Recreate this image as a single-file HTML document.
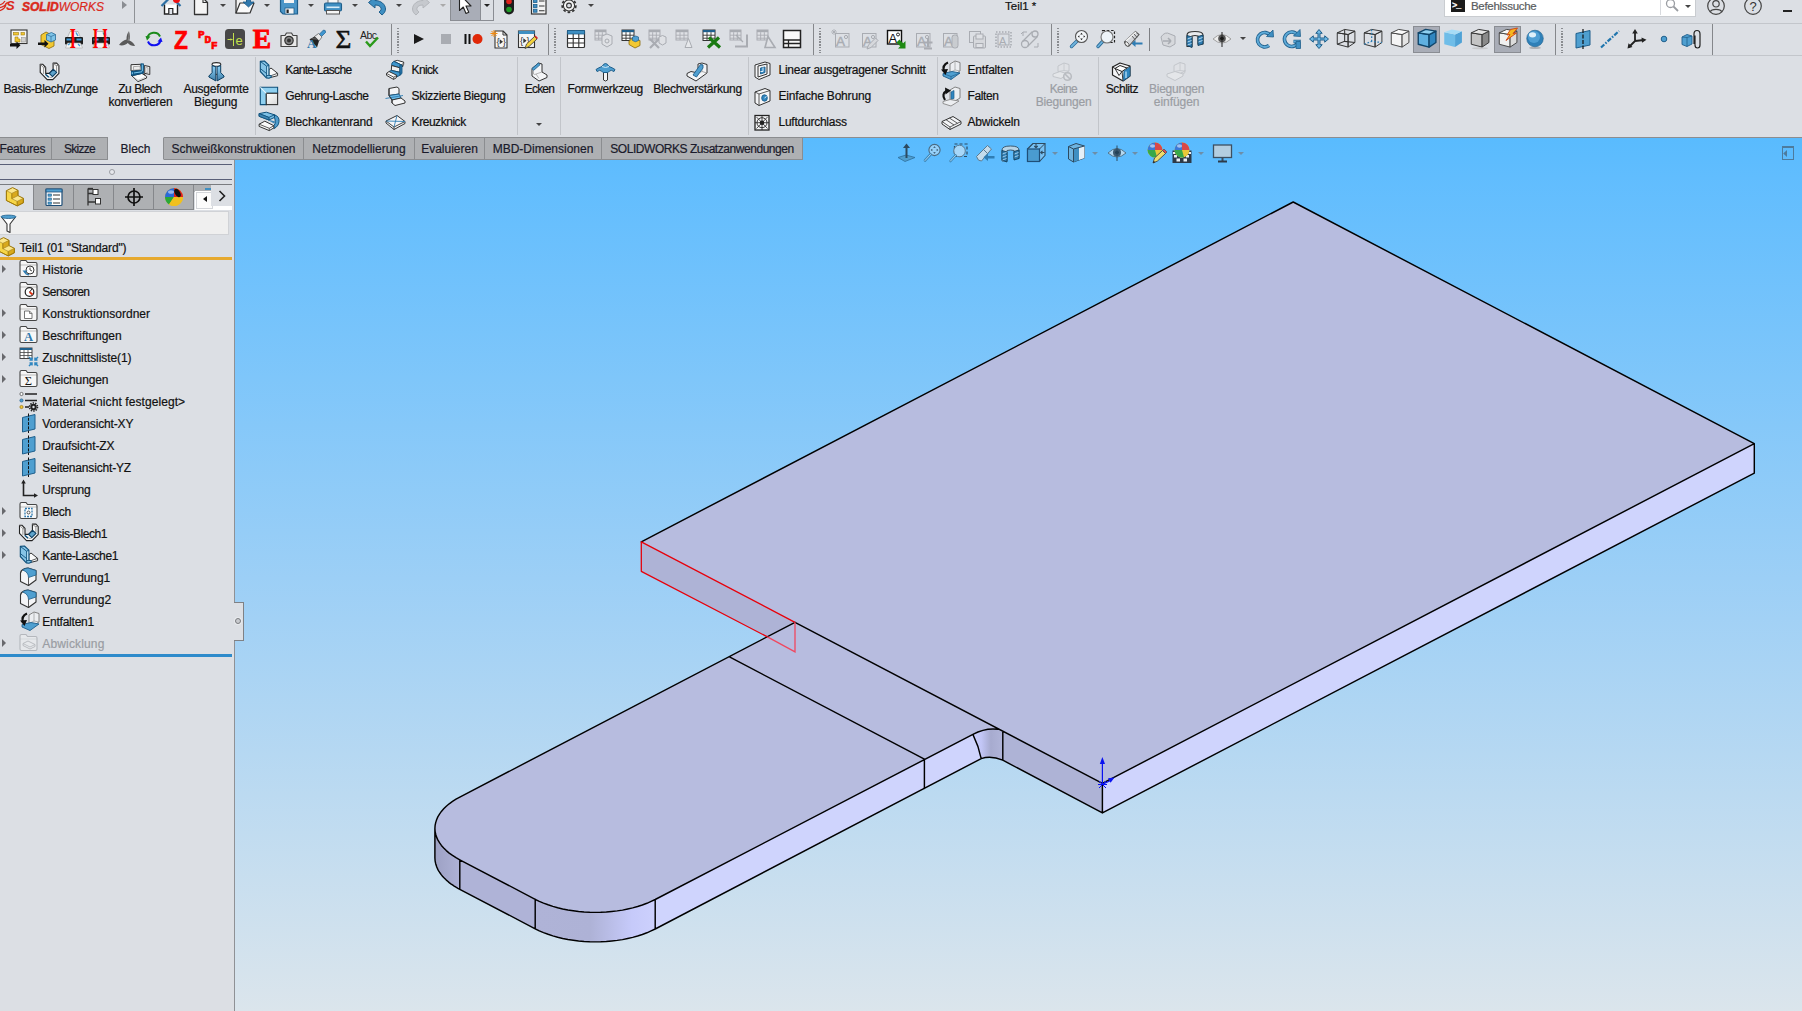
<!DOCTYPE html>
<html lang="de"><head><meta charset="utf-8"><title>Teil1 - SOLIDWORKS</title>
<style>
*{box-sizing:border-box;margin:0;padding:0}
html,body{width:1802px;height:1011px;overflow:hidden}
body{position:relative;-webkit-text-stroke:0.2px;background:#dcdfe4;font-family:"Liberation Sans",sans-serif;font-size:12px;color:#111;line-height:14px}
.abs{position:absolute}
#vp{position:absolute;left:0;top:138px;width:1802px;height:873px;background:linear-gradient(#59bbfe 0px,#61bdfe 40px,#9ccff6 440px,#dbe5ec 873px)}
#top{position:absolute;left:0;top:0;width:1802px;height:138px;background:#dcdfe4;border-bottom:1px solid #8c8d90}
.hl{position:absolute;left:0;width:1802px;height:1px;background:#c3c6cb}
.vs{position:absolute;width:1px;background:#c2c5ca}
.t{position:absolute;white-space:nowrap;line-height:14px;color:#111}
.tc{position:absolute;white-space:nowrap;line-height:13px;text-align:center;color:#111;transform:translateX(-50%)}
.g{color:#9a9da3 !important}
svg{overflow:visible}
.ic{position:absolute;width:24px;height:24px}
.dd{position:absolute;width:0;height:0;border:3px solid transparent;border-top:3.5px solid #444;border-bottom:0}
#tabs{position:absolute;left:0;top:137px;height:23px;width:803px}
.tab{position:absolute;top:0;height:23px;background:#aeb0b3;border:1px solid #8b8d90;border-left:0;line-height:23.5px;text-align:center;white-space:nowrap;color:#1a1a2a;font-size:12px}
.tab.act{background:#dcdfe4;border-color:#dcdfe4;border-right:1px solid #8b8d90}
#panel{position:absolute;left:0;top:160px;width:234px;height:851px;background:#dcdfe4}
#pborder{position:absolute;left:234px;top:160px;width:1px;height:851px;background:#8f9195}
.ti{position:absolute;left:42px;white-space:nowrap;line-height:24px;height:22px;color:#111}
.ex{position:absolute;left:2px;width:0;height:0;border:4px solid transparent;border-left:4.5px solid #68696d;border-right:0}
</style></head><body>

<div id="vp"></div>
<div id="top">
<div class="hl" style="top:23px"></div>
<div class="hl" style="top:55px"></div>
<div class="vs" style="left:134px;top:0;height:23px;background:#8f9296"></div>
<!-- logo -->
<div class="t" style="left:22px;top:-1.5px;font-size:12px;line-height:16px;color:#da291c;font-style:italic;letter-spacing:0px"><b style="-webkit-text-stroke:.5px #da291c">SOLID</b>WORKS</div>
<svg class="abs" style="left:-4px;top:-3px" width="22" height="16" viewBox="0 0 22 16"><path d="M0,8 Q6,9 9,4 M1,11 Q8,11 11.500,5 M3,14 Q10,12 10,6" fill="none" stroke="#da291c" stroke-width="1.300"/><text x="10" y="13" font-size="13" font-style="italic" font-weight="bold" font-family="Liberation Sans,sans-serif" fill="#da291c">S</text></svg>
<div class="abs" style="left:122px;top:1px;width:0;height:0;border:4.5px solid transparent;border-left:5px solid #8a8d92;border-right:0"></div>
<div class="t" style="left:1005px;top:-1px;font-size:11.5px">Teil1 *</div>
<!-- search -->
<div class="abs" style="left:1444px;top:-2px;width:252px;height:19px;background:#fff;border:1px solid #c9ccd0"></div>
<div class="abs" style="left:1451px;top:-1px;width:14px;height:13px;background:#1b1b1b"></div>
<div class="t" style="left:1452px;top:-2px;font-size:9px;color:#fff;font-weight:bold;letter-spacing:-1px">&gt;_</div>
<div class="t" style="left:1471px;top:-1px;font-size:11.5px;color:#5a5c60;letter-spacing:-0.3px">Befehlssuche</div>
<div class="vs" style="left:1660px;top:0;height:15px;background:#d8dade"></div>
<div class="dd" style="left:1685px;top:5px"></div>
</div>

<div id="qat">
<!-- home -->
<svg class="abs" style="left:160px;top:-8px" width="22" height="24" viewBox="0 0 22 24"><path d="M4.5,12.5 V22 H17.500 V12.5" fill="#fff" stroke="#222" stroke-width="1.4"/><path d="M8.8,22 v-5.500 h4 V22" fill="#dfe3ea" stroke="#222" stroke-width="1.2"/><path d="M1.500,14 L11,4.500 L20.500,14" fill="none" stroke="#2d6fa3" stroke-width="2.200"/><circle cx="16.500" cy="7.500" r="3.500" fill="#f01010"/></svg>
<!-- new -->
<svg class="abs" style="left:192px;top:-4.500px" width="18" height="24" viewBox="0 0 18 24"><path d="M2.500,2 H11 L15.500,6.500 V18.500 H2.500Z" fill="#f4f4f4" stroke="#333" stroke-width="1.3" stroke-linejoin="round"/><path d="M11,2 V6.500 H15.500" fill="none" stroke="#333" stroke-width="1.1"/></svg>
<div class="dd" style="left:220px;top:4px"></div>
<!-- open -->
<svg class="abs" style="left:233px;top:-8px" width="24" height="24" viewBox="0 0 24 24"><path d="M3,4 H14 V21 H3Z" fill="#f2f2f2" stroke="#333" stroke-width="1.2"/><path d="M7,11 H21 L17,21 H3Z" fill="#fafafa" stroke="#333" stroke-width="1.2" stroke-linejoin="round"/><path d="M13.500,4 v6 h-3.500 l5.500,5 l5.500,-5 h-3.500 v-6z" fill="#2f78ad" stroke="#1d5a86" stroke-width=".8"/></svg>
<div class="dd" style="left:264px;top:4px"></div>
<!-- save -->
<svg class="abs" style="left:278px;top:-8px" width="22" height="24" viewBox="0 0 22 24"><path d="M2.500,2 H19.500 V22 H5 L2.500,19.500Z" fill="#4b96c8" stroke="#1f5f8c" stroke-width="1.2"/><rect x="6" y="2" width="10" height="9" fill="#f4f4f4"/><rect x="7" y="16" width="9" height="6" fill="#f4f4f4" stroke="#1f5f8c" stroke-width=".8"/><rect x="8.500" y="17.500" width="2.200" height="3.500" fill="#222"/></svg>
<div class="dd" style="left:308px;top:4px"></div>
<!-- print -->
<svg class="abs" style="left:322px;top:-8px" width="22" height="24" viewBox="0 0 22 24"><rect x="6" y="2" width="10" height="11" fill="#f6f6f6" stroke="#666" stroke-width=".9"/><rect x="2.500" y="11" width="17" height="8" rx="1.500" fill="#3f8fc2" stroke="#1f5f8c" stroke-width="1.100"/><rect x="4.500" y="14.500" width="13" height="1.600" fill="#d8ecf8"/><rect x="4.500" y="18.500" width="13" height="3.500" fill="#f6f6f6" stroke="#555" stroke-width="1"/></svg>
<div class="dd" style="left:352px;top:4px"></div>
<!-- undo -->
<svg class="abs" style="left:366px;top:-6px" width="22" height="24" viewBox="0 0 22 24"><path d="M2.500,8.500 L9,3 V6.500 C15,6.500 19.500,10.500 19.500,15 C19.500,17.500 18,19.500 16,21 L13,18 C15,16.500 15.500,15.500 15,14 C14.500,12 12,11 9,11 V14Z" fill="#3f8fc2" stroke="#1f5f8c" stroke-width="1"/></svg>
<div class="dd" style="left:396px;top:4px"></div>
<!-- redo gray -->
<svg class="abs" style="left:410px;top:-6px" width="22" height="24" viewBox="0 0 22 24"><path d="M19.500,8.500 L13,3 V6.500 C7,6.500 2.500,10.500 2.500,15 C2.500,17.500 4,19.500 6,21 L9,18 C7,16.500 6.500,15.500 7,14 C7.500,12 10,11 13,11 V14Z" fill="#c6c9ce" stroke="#b4b7bc" stroke-width="1"/></svg>
<div class="dd" style="left:440px;top:4px;border-top-color:#aaa"></div>
<!-- select -->
<div class="abs" style="left:450px;top:-2px;width:31px;height:23px;background:#a9adb7;border:1px solid #8a8d93"></div>
<div class="abs" style="left:480px;top:-2px;width:14px;height:23px;border:1px solid #8a8d93;border-left:0"></div>
<svg class="abs" style="left:457px;top:-8px" width="16" height="24" viewBox="0 0 16 24"><path d="M2.500,2 V18.500 L6.300,15 L9,21.500 L11.800,20.300 L9,14 H14Z" fill="#fff" stroke="#222" stroke-width="1.1" stroke-linejoin="round"/></svg>
<div class="dd" style="left:483.500px;top:4px;border-top-color:#222"></div>
<!-- traffic light -->
<svg class="abs" style="left:503px;top:-8px" width="12" height="24" viewBox="0 0 12 24"><rect x="1" y="1" width="10" height="21.500" rx="5" fill="#1d1d1d"/><circle cx="6" cy="9.500" r="2.800" fill="#e0221c"/><circle cx="6" cy="17.500" r="2.800" fill="#1f9a26"/></svg>
<!-- options list -->
<svg class="abs" style="left:530px;top:-8px" width="18" height="24" viewBox="0 0 18 24"><rect x="1.500" y="2" width="14.500" height="20" fill="#f2f2f2" stroke="#333" stroke-width="1.2"/><g fill="#3f8fc2" stroke="#1f5f8c" stroke-width=".8"><rect x="3.500" y="7.500" width="3.500" height="3"/><rect x="3.500" y="12.500" width="3.500" height="3"/><rect x="3.500" y="17.200" width="3.500" height="3"/></g><path d="M9,9 h5.500 M9,14 h5.500 M9,18.700 h5.500" stroke="#333" stroke-width="1.100"/></svg>
<!-- gear -->
<svg class="abs" style="left:560px;top:-7px" width="18" height="22" viewBox="0 0 18 22"><circle cx="9" cy="12.500" r="6.800" fill="#f4f4f4" stroke="#333" stroke-width="1.800" stroke-dasharray="2.600 2.100"/><circle cx="9" cy="12.500" r="5.600" fill="#f4f4f4" stroke="#333" stroke-width="1.100"/><circle cx="9" cy="12.500" r="2.400" fill="#dcdfe4" stroke="#333" stroke-width="1.100"/></svg>
<div class="dd" style="left:587.500px;top:4px"></div>
<!-- right side: search icon, user, help, minimize -->
<svg class="abs" style="left:1664px;top:-3px" width="16" height="16" viewBox="0 0 16 16"><circle cx="6.500" cy="6.500" r="4" fill="none" stroke="#9a9da2" stroke-width="1.300"/><path d="M9.500,9.500 L14,14" stroke="#9a9da2" stroke-width="1.800"/></svg>
<svg class="abs" style="left:1706px;top:-4px" width="20" height="20" viewBox="0 0 20 20"><circle cx="10" cy="10" r="8.300" fill="none" stroke="#444" stroke-width="1.200"/><circle cx="10" cy="7.800" r="3.200" fill="none" stroke="#444" stroke-width="1.200"/><path d="M4.300,15.800 C5.500,12.500 14.500,12.500 15.700,15.800" fill="none" stroke="#444" stroke-width="1.200"/></svg>
<svg class="abs" style="left:1743px;top:-4px" width="20" height="20" viewBox="0 0 20 20"><circle cx="10" cy="10" r="8.300" fill="none" stroke="#444" stroke-width="1.200"/><text x="10" y="14.500" font-size="13" font-family="Liberation Sans,sans-serif" text-anchor="middle" fill="#333">?</text></svg>
<div class="abs" style="left:1783px;top:10px;width:9px;height:1.500px;background:#222"></div>
</div>

<div id="tb2">
<div class="abs" style="left:1413px;top:26px;width:27px;height:27px;background:#a9adb7;border:1px solid #8a8d93"></div>
<div class="abs" style="left:1494px;top:26px;width:27px;height:27px;background:#a9adb7;border:1px solid #8a8d93"></div>
<svg class="abs" style="left:9px;top:29px" width="20" height="20" viewBox="0 0 20 20"><rect x="2" y="1" width="16" height="13.500" fill="#f6f6f6" stroke="#333" stroke-width="1.100"/><rect x="4.500" y="3.500" width="5" height="2.500" fill="#f2c832" stroke="#a07d10" stroke-width=".6"/><rect x="12" y="3.500" width="3.500" height="2.500" fill="#f2c832" stroke="#a07d10" stroke-width=".6"/><path d="M6,8 h3 v2 h2 v3 h-5z" fill="#f2c832" stroke="#a07d10" stroke-width=".6"/><rect x="12.500" y="8.500" width="4" height="4.500" fill="#d0d0d0" stroke="#888" stroke-width=".5"/><path d="M1,15 h6.500 v-2.500 l4,3.800 l-4,3.800 v-2.600 h-6.500z" fill="#111"/></svg>
<svg class="abs" style="left:37px;top:29px" width="20" height="20" viewBox="0 0 20 20"><path d="M4,6 l5,-3 l4,2 v3 l4,2 v7 l-5,2.500 l-8,-4z" fill="#f2c832" stroke="#8a6a08" stroke-width=".8"/><path d="M9.500,5.500 l5,-2 l4,2 v5.500 l-4.500,2 l-4.500,-2z" fill="#7fc4e8" stroke="#2a6a96" stroke-width=".8"/><path d="M14,7.500 v5.500 M9.500,5.500 l4.500,2 l4.500,-2" fill="none" stroke="#2a6a96" stroke-width=".7"/><path d="M1,13.500 h6.500 v-2.500 l4,3.800 l-4,3.800 v-2.600 h-6.500z" fill="#111"/></svg>
<svg class="abs" style="left:64px;top:29px" width="20" height="20" viewBox="0 0 20 20"><path d="M6,2.500 h8 l2.500,6 h-13z" fill="#f4f4f4" stroke="#999" stroke-width=".6"/><path d="M12,3.500 l2,3.500" stroke="#3f9ad8" stroke-width="1.500"/><rect x="1" y="8" width="18" height="7.500" rx="1" fill="#1c1c1c"/><rect x="2.500" y="9.500" width="5" height="2" fill="#3f9ad8"/><rect x="12.500" y="9.500" width="5" height="2" fill="#3f9ad8"/><path d="M3.500,14 h13 l2,5 h-17z" fill="#f4f4f4" stroke="#aaa" stroke-width=".6"/><path d="M4,16 l2,-1.500 M14,15 l2,2" stroke="#3f9ad8" stroke-width="1.200"/><text transform="translate(8.7,19) scale(.55,1)" font-size="28.500" font-family="Liberation Serif,serif" font-weight="bold" fill="#f00" text-anchor="middle">I</text></svg>
<svg class="abs" style="left:91px;top:29px" width="20" height="20" viewBox="0 0 20 20"><path d="M6,2.500 h8 l2.500,6 h-13z" fill="#f4f4f4" stroke="#999" stroke-width=".6"/><path d="M12,3.500 l2,3.500" stroke="#3f9ad8" stroke-width="1.500"/><rect x="1" y="8" width="18" height="7.500" rx="1" fill="#1c1c1c"/><rect x="2.500" y="9.500" width="5" height="2" fill="#3f9ad8"/><rect x="12.500" y="9.500" width="5" height="2" fill="#3f9ad8"/><path d="M3.500,14 h13 l2,5 h-17z" fill="#f4f4f4" stroke="#aaa" stroke-width=".6"/><path d="M4,16 l2,-1.500 M14,15 l2,2" stroke="#3f9ad8" stroke-width="1.200"/><text transform="translate(4.5,19) scale(.5,1)" font-size="28.500" font-family="Liberation Serif,serif" font-weight="bold" fill="#f00" text-anchor="middle">I</text><text transform="translate(14,19) scale(.5,1)" font-size="28.500" font-family="Liberation Serif,serif" font-weight="bold" fill="#f00" text-anchor="middle">I</text></svg>
<svg class="abs" style="left:117px;top:29px" width="20" height="20" viewBox="0 0 20 20"><path d="M9.500,10.500 C9.500,7 10.300,4 11.800,2.500 C13.300,5.500 13.300,8.500 12.300,11.500 C14.500,12.500 17,14 18,17 C15,17.200 12.500,16 10.800,14 C8.500,16 5.500,17 2,16 C4,13 6.500,11.300 9.500,10.500Z" fill="#5a5a5a"/><path d="M11.800,2.500 C12.300,6 12,9 11,12" stroke="#999" stroke-width=".8" fill="none"/></svg>
<svg class="abs" style="left:144px;top:29px" width="20" height="20" viewBox="0 0 20 20"><path d="M3.500,9 A6.500,6 0 0 1 16,7.500" fill="none" stroke="#1b8a1b" stroke-width="2"/><path d="M1.500,7 l5,0.500 l-3.500,4z" fill="#1b8a1b"/><path d="M16.500,11 A6.500,6 0 0 1 4,12.500" fill="none" stroke="#1010f0" stroke-width="2"/><path d="M18.500,13 l-5,-0.500 l3.500,-4z" fill="#1010f0"/></svg>
<svg class="abs" style="left:171px;top:29px" width="20" height="20" viewBox="0 0 20 20"><text transform="translate(10,19.5) scale(.86,1)" font-size="26.500" font-family="Liberation Sans,sans-serif" font-weight="bold" fill="#f00" stroke="#f00" stroke-width=".6" text-anchor="middle">Z</text></svg>
<svg class="abs" style="left:198px;top:29px" width="20" height="20" viewBox="0 0 20 20"><g font-family="Liberation Mono,monospace" font-weight="bold" fill="#f00" stroke="#f00" stroke-width=".7" font-size="11"><text x="0" y="8.500">P</text><text x="6.500" y="14">D</text><text x="13" y="19.500">F</text></g></svg>
<svg class="abs" style="left:225px;top:29px" width="20" height="20" viewBox="0 0 20 20"><rect x="0" y="0" width="20" height="20" rx="3.500" fill="#484848"/><path d="M2.500,10.500 h5 M8.500,4 v13" stroke="#c4e04c" stroke-width="1"/><path d="M7.500,10.500 l-2,-1.300 v2.600z" fill="#c4e04c"/><text x="10.500" y="15.500" font-size="13" font-family="Liberation Sans,sans-serif" fill="#c4e04c">e</text></svg>
<svg class="abs" style="left:252px;top:29px" width="20" height="20" viewBox="0 0 20 20"><text transform="translate(10,19) scale(1.02,1)" font-size="27" font-family="Liberation Serif,serif" font-weight="bold" fill="#f00" stroke="#f00" stroke-width=".9" text-anchor="middle">E</text></svg>
<svg class="abs" style="left:279px;top:29px" width="20" height="20" viewBox="0 0 20 20"><path d="M2,6.500 h4 l1.500,-2.500 h5 l1.500,2.500 h4 v11 h-16z" fill="#e8e8e8" stroke="#444" stroke-width="1.200" stroke-linejoin="round"/><circle cx="10" cy="11.500" r="4.200" fill="#888" stroke="#333" stroke-width="1.200"/><circle cx="10" cy="11.500" r="2" fill="#333"/></svg>
<svg class="abs" style="left:306px;top:29px" width="20" height="20" viewBox="0 0 20 20"><path d="M13,5.500 l4.500,-4.500 q2.500,0 2,2.500 l-4.500,4.500z" fill="#3f96d0" stroke="#1f5f8c" stroke-width=".7"/><path d="M8.500,7.500 l4,-3 l3.500,3.500 l-3,4z" fill="#e8e8e8" stroke="#555" stroke-width=".7"/><path d="M8.500,7.500 l4.500,4.500 l-2,6.500 l-1.500,-2 l-6,-6z" fill="#222"/><path d="M4,10 l5.500,-2 l3,3" fill="#555"/><text x="1" y="19" font-size="13" font-family="Liberation Serif,serif" font-weight="bold" fill="#2f78ad">A</text></svg>
<svg class="abs" style="left:333px;top:29px" width="20" height="20" viewBox="0 0 20 20"><text transform="translate(10.5,19) scale(1.05,1)" font-size="26" font-family="Liberation Serif,serif" fill="#111" stroke="#111" stroke-width=".5" text-anchor="middle">Σ</text></svg>
<svg class="abs" style="left:360px;top:29px" width="20" height="20" viewBox="0 0 20 20"><text x="0" y="9.500" font-size="10.500" font-family="Liberation Sans,sans-serif" fill="#222" letter-spacing="-.5">Abc</text><path d="M6,12.500 L10,17 L18,8.500" fill="none" stroke="#2a9a1a" stroke-width="2.400"/></svg>
<svg class="abs" style="left:409px;top:29px" width="20" height="20" viewBox="0 0 20 20"><path d="M5,5 L15,10 L5,15Z" fill="#1a1a1a"/></svg>
<svg class="abs" style="left:436px;top:29px" width="20" height="20" viewBox="0 0 20 20"><rect x="5" y="5" width="10" height="10" fill="#a9acb2"/></svg>
<svg class="abs" style="left:462px;top:29px" width="20" height="20" viewBox="0 0 20 20"><rect x="2.500" y="5" width="2" height="10" fill="#111"/><rect x="6.500" y="5" width="2" height="10" fill="#111"/><circle cx="15.500" cy="10" r="5" fill="#e02808"/></svg>
<svg class="abs" style="left:490px;top:29px" width="20" height="20" viewBox="0 0 20 20"><path d="M5,2 h8 l4,4 v13 h-12z" fill="#f6f6f6" stroke="#333" stroke-width="1.100" stroke-linejoin="round"/><path d="M13,2 v4 h4" fill="none" stroke="#333" stroke-width="1"/><text x="6.500" y="16" font-size="9.500" font-family="Liberation Sans,sans-serif" fill="#333">{</text><text x="12.800" y="16" font-size="9.500" font-family="Liberation Sans,sans-serif" fill="#333">}</text><path d="M9.700,10.300 v5 l3.300,-2.500z" fill="#333"/><path d="M4,1 v7 M0.500,4.500 h7 M1.500,2 l5,5 M6.500,2 l-5,5" stroke="#f08a10" stroke-width="1"/></svg>
<svg class="abs" style="left:517px;top:29px" width="20" height="20" viewBox="0 0 20 20"><rect x="1.500" y="2" width="16" height="16.500" fill="#f6f6f6" stroke="#333" stroke-width="1.100"/><rect x="1.500" y="2" width="16" height="3" fill="#3f8fc2"/><text x="3" y="15" font-size="9.500" font-family="Liberation Sans,sans-serif" fill="#333">{</text><text x="9.500" y="15" font-size="9.500" font-family="Liberation Sans,sans-serif" fill="#333">}</text><path d="M6.300,9.300 v5 l3.300,-2.500z" fill="#333"/><path d="M8,19.500 l1.500,-4.500 l8,-7.500 l2.500,2.500 l-8,7.500z" fill="#f4d23c" stroke="#444" stroke-width=".9"/><path d="M17.500,7.500 l1,-1 l2.500,2.500 l-1,1z" fill="#e02020"/></svg>
<svg class="abs" style="left:566px;top:29px" width="20" height="20" viewBox="0 0 20 20"><rect x="1.500" y="1.500" width="17" height="17" rx="1" fill="#fff" stroke="#333" stroke-width="1.200"/><rect x="1.500" y="1.500" width="17" height="3.500" fill="#3f8fc2" stroke="#1f5f8c" stroke-width=".8"/><path d="M1.500,9.500 h17 M1.500,14 h17 M7.200,5 v13.500 M12.800,5 v13.500" stroke="#333" stroke-width="1.100"/></svg>
<svg class="abs" style="left:594px;top:29px" width="20" height="20" viewBox="0 0 20 20"><rect x="1" y="1" width="11" height="10" fill="#dfe1e5" stroke="#a9acb2" stroke-width="1"/><rect x="1" y="1" width="11" height="2.2" fill="#a9acb2"/><path d="M1,6.2 h11 M1,9.2 h11 M4.66667,3.2 v7.8 M8.33333,3.2 v7.8" stroke="#a9acb2" stroke-width=".9" fill="none"/><path d="M8,7 l5,-2 l5,2 v8 l-5,3 l-5,-3z" fill="#dfe1e5" stroke="#a9acb2" stroke-width="1"/><circle cx="13" cy="12" r="2" fill="none" stroke="#a9acb2"/></svg>
<svg class="abs" style="left:621px;top:29px" width="20" height="20" viewBox="0 0 20 20"><rect x="1" y="1" width="12" height="10.5" fill="#fff" stroke="#333" stroke-width="1"/><rect x="1" y="1" width="12" height="2.2" fill="#1f5f8c"/><path d="M1,6.2 h12 M1,9.2 h12 M5,3.2 v8.3 M9,3.2 v8.3" stroke="#333" stroke-width=".9" fill="none"/><path d="M8,12 l4,-3 l7,2.500 v5 l-5,2.500 l-6,-3.500z" fill="#f2c832" stroke="#8a6a08" stroke-width=".8"/><path d="M11.500,8 l3,-1 l3,1 v3.500 l-3,1.200 l-3,-1.200z" fill="#4fa0d4" stroke="#1f5f8c" stroke-width=".7"/></svg>
<svg class="abs" style="left:648px;top:29px" width="20" height="20" viewBox="0 0 20 20"><rect x="1" y="1" width="11" height="10" fill="#dfe1e5" stroke="#a9acb2" stroke-width="1"/><rect x="1" y="1" width="11" height="2.2" fill="#a9acb2"/><path d="M1,6.2 h11 M1,9.2 h11 M4.66667,3.2 v7.8 M8.33333,3.2 v7.8" stroke="#a9acb2" stroke-width=".9" fill="none"/><path d="M2,19 l9,-9 M2,10 l9,9" stroke="#a9acb2" stroke-width="2.200"/><path d="M11,8 l3.500,-1.500 l3.500,1.500 v6 l-3.500,2 l-3.500,-2z" fill="#dfe1e5" stroke="#a9acb2"/></svg>
<svg class="abs" style="left:675px;top:29px" width="20" height="20" viewBox="0 0 20 20"><rect x="1" y="1" width="12" height="10" fill="#dfe1e5" stroke="#a9acb2" stroke-width="1"/><rect x="1" y="1" width="12" height="2.2" fill="#a9acb2"/><path d="M1,6.2 h12 M1,9.2 h12 M5,3.2 v7.8 M9,3.2 v7.8" stroke="#a9acb2" stroke-width=".9" fill="none"/><path d="M10,18.500 l3.500,-9 l3.500,9z" fill="#e6e8eb" stroke="#a9acb2"/></svg>
<svg class="abs" style="left:702px;top:29px" width="20" height="20" viewBox="0 0 20 20"><rect x="1" y="1" width="12" height="10.5" fill="#fff" stroke="#333" stroke-width="1"/><rect x="1" y="1" width="12" height="2.2" fill="#1f5f8c"/><path d="M1,6.2 h12 M1,9.2 h12 M5,3.2 v8.3 M9,3.2 v8.3" stroke="#333" stroke-width=".9" fill="none"/><path d="M6,18.500 l11,-10 M7,8.500 l11,10" stroke="#1a7a12" stroke-width="3.200"/></svg>
<svg class="abs" style="left:729px;top:29px" width="20" height="20" viewBox="0 0 20 20"><rect x="1" y="1" width="11" height="10" fill="#dfe1e5" stroke="#a9acb2" stroke-width="1"/><rect x="1" y="1" width="11" height="2.2" fill="#a9acb2"/><path d="M1,6.2 h11 M1,9.2 h11 M4.66667,3.2 v7.8 M8.33333,3.2 v7.8" stroke="#a9acb2" stroke-width=".9" fill="none"/><path d="M6,17.500 h12 v-12" fill="none" stroke="#a9acb2" stroke-width="2"/><path d="M7,6 l7,7" stroke="#a9acb2" stroke-width="1.200"/></svg>
<svg class="abs" style="left:756px;top:29px" width="20" height="20" viewBox="0 0 20 20"><rect x="1" y="1" width="11" height="10" fill="#dfe1e5" stroke="#a9acb2" stroke-width="1"/><rect x="1" y="1" width="11" height="2.2" fill="#a9acb2"/><path d="M1,6.2 h11 M1,9.2 h11 M4.66667,3.2 v7.8 M8.33333,3.2 v7.8" stroke="#a9acb2" stroke-width=".9" fill="none"/><path d="M9,18.500 h10 l-7,-11z" fill="#dfe1e5" stroke="#a9acb2" stroke-width="1.600"/></svg>
<svg class="abs" style="left:782px;top:29px" width="20" height="20" viewBox="0 0 20 20"><rect x="1.500" y="1.500" width="17" height="17" fill="#f8f8f8" stroke="#222" stroke-width="1.500"/><path d="M1.500,11 h17 M1.500,14.500 h17 M6.500,11 v7.500" stroke="#222" stroke-width="1.300"/></svg>
<svg class="abs" style="left:832px;top:29px" width="20" height="20" viewBox="0 0 20 20"><rect x="3.500" y="4.500" width="13.500" height="13.500" fill="none" stroke="#a9acb2" stroke-width="1"/><text x="4" y="17" font-size="13.500" font-family="Liberation Sans,sans-serif" fill="#a9acb2" stroke="#a9acb2" stroke-width=".4">A</text><circle cx="14" cy="8" r="1.600" fill="none" stroke="#a9acb2" stroke-width="1"/><path d="M2,0 v6 M-1,3 h6 M0,1 l4,4 M4,1 l-4,4" stroke="#a9acb2" stroke-width=".8"/></svg>
<svg class="abs" style="left:859px;top:29px" width="20" height="20" viewBox="0 0 20 20"><rect x="3.500" y="4.500" width="13.500" height="13.500" fill="none" stroke="#a9acb2" stroke-width="1"/><text x="4" y="17" font-size="13.500" font-family="Liberation Sans,sans-serif" fill="#a9acb2" stroke="#a9acb2" stroke-width=".4">A</text><circle cx="14" cy="8" r="1.600" fill="none" stroke="#a9acb2" stroke-width="1"/><path d="M8,20 l1.500,-4 l7,-7 l2.500,2.500 l-7,7z" fill="#d6d8dc" stroke="#a9acb2"/></svg>
<svg class="abs" style="left:886px;top:29px" width="20" height="20" viewBox="0 0 20 20"><rect x="1.500" y="1.500" width="14" height="13.500" fill="#fff" stroke="#111" stroke-width="1.400"/><text x="2.500" y="13.500" font-size="13" font-family="Liberation Sans,sans-serif" fill="#111">A</text><circle cx="12" cy="5.500" r="1.500" fill="none" stroke="#111" stroke-width=".9"/><path d="M19.500,19.500 L12,19.500 L14.300,17.200 L10.500,13.400 L13.400,10.500 L17.200,14.300 L19.500,12Z" fill="#1e8a12"/></svg>
<svg class="abs" style="left:913px;top:29px" width="20" height="20" viewBox="0 0 20 20"><rect x="3.500" y="4.500" width="13.500" height="13.500" fill="none" stroke="#a9acb2" stroke-width="1"/><text x="4" y="17" font-size="13.500" font-family="Liberation Sans,sans-serif" fill="#a9acb2" stroke="#a9acb2" stroke-width=".4">A</text><circle cx="14" cy="8" r="1.600" fill="none" stroke="#a9acb2" stroke-width="1"/><path d="M15,9 v9 M10.500,13.500 h9 M11,19.500 h8" stroke="#a9acb2" stroke-width="2"/></svg>
<svg class="abs" style="left:940px;top:29px" width="20" height="20" viewBox="0 0 20 20"><rect x="3.500" y="4.500" width="13.500" height="13.500" fill="none" stroke="#a9acb2" stroke-width="1"/><text x="4" y="17" font-size="13.500" font-family="Liberation Sans,sans-serif" fill="#a9acb2" stroke="#a9acb2" stroke-width=".4">A</text><circle cx="14" cy="8" r="1.600" fill="none" stroke="#a9acb2" stroke-width="1"/><rect x="12" y="6" width="6" height="13" rx="2.500" fill="#c9ccd0" stroke="#a9acb2"/></svg>
<svg class="abs" style="left:967px;top:29px" width="20" height="20" viewBox="0 0 20 20"><rect x="2.500" y="2.500" width="11" height="11" fill="none" stroke="#a9acb2"/><rect x="6.500" y="7" width="12" height="12" rx="1" fill="#d6d8dc" stroke="#a9acb2"/><rect x="9" y="5" width="7" height="5" fill="#dfe1e5" stroke="#a9acb2"/><rect x="9" y="14.500" width="7" height="4" fill="#dfe1e5" stroke="#a9acb2"/></svg>
<svg class="abs" style="left:994px;top:29px" width="20" height="20" viewBox="0 0 20 20"><rect x="2" y="3" width="15" height="15" fill="none" stroke="#a9acb2" stroke-width="1.600" stroke-dasharray="1.500 1.500"/><rect x="4" y="5" width="11" height="11" fill="none" stroke="#a9acb2"/><text x="5" y="15.500" font-size="11" font-family="Liberation Sans,sans-serif" fill="#a9acb2">A</text></svg>
<svg class="abs" style="left:1020px;top:29px" width="20" height="20" viewBox="0 0 20 20"><circle cx="5" cy="15" r="3.500" fill="none" stroke="#a9acb2" stroke-width="1.300"/><circle cx="15" cy="5" r="3" fill="none" stroke="#a9acb2" stroke-width="1.300"/><path d="M2.500,12.500 l10,-10 M7.500,17.500 l10,-10" stroke="#a9acb2" stroke-width="1.300"/><path d="M3,3 l4,0 M3,3 l0,4 M3,3 l-2,2" stroke="#a9acb2" fill="none"/><path d="M18,18 l-4,0 M18,18 l0,-4" stroke="#a9acb2" fill="none"/></svg>
<svg class="abs" style="left:1069px;top:29px" width="20" height="20" viewBox="0 0 20 20"><path d="M8.500,11.500 L2.500,17.500" stroke="#2a6a98" stroke-width="3.400" stroke-linecap="round"/><path d="M8.500,11.500 L2.500,17.500" stroke="#6fb4dc" stroke-width="1.800" stroke-linecap="round"/><circle cx="12.500" cy="7.500" r="6" fill="#f3f6f9" stroke="#555" stroke-width="1.100"/><path d="M12.500,3.800 l1.300,1.600 h-2.600z M12.500,11.200 l1.300,-1.600 h-2.600z M8.800,7.500 l1.600,-1.300 v2.600z M16.200,7.500 l-1.600,-1.300 v2.600z" fill="#222"/></svg>
<svg class="abs" style="left:1096px;top:29px" width="20" height="20" viewBox="0 0 20 20"><rect x="6.500" y="1.500" width="12" height="12" fill="none" stroke="#222" stroke-width="1.200" stroke-dasharray="2.500 1.800"/><path d="M7,12 L2,17.500" stroke="#2a6a98" stroke-width="3.400" stroke-linecap="round"/><path d="M7,12 L2,17.500" stroke="#6fb4dc" stroke-width="1.800" stroke-linecap="round"/><circle cx="11" cy="8" r="6" fill="#eef4f9" stroke="#777" stroke-width="1.100"/></svg>
<svg class="abs" style="left:1123px;top:29px" width="20" height="20" viewBox="0 0 20 20"><path d="M1.500,13 l11,-10.500 l3.500,3 l-10,11.500 q-3,1 -4.500,-4z" fill="#d4d6da" stroke="#555" stroke-width="1.100"/><path d="M3,12 l10,-9" stroke="#f6f6f6" stroke-width="1.600"/><path d="M9,7 l3,3.500 M11,5 l3,3.300" stroke="#555" stroke-width=".9"/><ellipse cx="4" cy="15" rx="1.500" ry="2.600" transform="rotate(-40 4 15)" fill="#eee" stroke="#555" stroke-width=".8"/><path d="M19.500,13.500 h-7 v-2.500 l-4,3.500 l4,3.500 v-2.500 h7z" fill="#2f7db3"/></svg>
<svg class="abs" style="left:1158px;top:29px" width="20" height="20" viewBox="0 0 20 20"><path d="M3,8 q4,-6 9,-3 l5,2 v8 l-5,3 l-7,-2z" fill="#d6d8dc" stroke="#a9acb2"/><path d="M5,12 h8 M13,12 l-3,-3 M13,12 l-3,3" stroke="#a9acb2" stroke-width="1.600" fill="none"/></svg>
<svg class="abs" style="left:1185px;top:29px" width="20" height="20" viewBox="0 0 20 20"><path d="M2,6 q0,-3.500 8,-3.500 q8,0 8,3.500 v9 h-5 v-8 q-3,-1 -6,0 v10.500 h-5z" fill="#e8eaed" stroke="#333" stroke-width="1.100"/><path d="M2,6.500 l5,1.500 v10.500 l-5,-2z" fill="#2f7db3" stroke="#123e5c" stroke-width=".9"/><path d="M13,7.500 l5,-1.500 v9 l-5,1.500z" fill="#2f7db3" stroke="#123e5c" stroke-width=".9"/><path d="M2.500,10 l4,-1.500 M2.500,13 l4,-1.500 M2.500,16 l4,-1.500 M13.500,10 l4,-1.500 M13.500,13 l4,-1.500" stroke="#bfe0f4" stroke-width=".9"/></svg>
<svg class="abs" style="left:1212px;top:29px" width="20" height="20" viewBox="0 0 20 20"><path d="M1,10 q9,-9 18,0 q-9,8 -18,0z" fill="#ececec" stroke="#999" stroke-width=".9"/><circle cx="10" cy="9.500" r="3.800" fill="#555"/><circle cx="10" cy="9.500" r="1.800" fill="#111"/><path d="M10,3 v15" stroke="#222" stroke-width="1"/></svg>
<svg class="abs" style="left:1254px;top:29px" width="20" height="20" viewBox="0 0 20 20"><path d="M16.500,6.500 A7.200,7.200 0 1 0 15,16.500" fill="none" stroke="#1f5f8c" stroke-width="3.600"/><path d="M16.500,6.500 A7.200,7.200 0 1 0 15,16.500" fill="none" stroke="#5fabd8" stroke-width="1.900"/><path d="M12.500,7.500 l7,0.500 l-0.500,-7z" fill="#3f8fc2" stroke="#1f5f8c" stroke-width=".8"/></svg>
<svg class="abs" style="left:1281px;top:29px" width="20" height="20" viewBox="0 0 20 20"><path d="M16.500,6 A7.200,7.200 0 1 0 17.500,12.500 h-5" fill="none" stroke="#1f5f8c" stroke-width="3.600"/><path d="M16.500,6 A7.200,7.200 0 1 0 17.500,12.500 h-5" fill="none" stroke="#5fabd8" stroke-width="1.900"/><path d="M12.500,7 l7,0.500 l-0.500,-7z" fill="#3f8fc2" stroke="#1f5f8c" stroke-width=".8"/><path d="M15,12.500 v7 h4.500 v-7z" fill="#3f8fc2" stroke="#1f5f8c" stroke-width=".8"/></svg>
<svg class="abs" style="left:1309px;top:29px" width="20" height="20" viewBox="0 0 20 20"><path d="M10,0.500 l3.200,3.800 h-2.200 v4.700 h4.700 v-2.200 l3.800,3.200 l-3.800,3.200 v-2.200 h-4.700 v4.700 h2.200 l-3.200,3.800 l-3.200,-3.800 h2.200 v-4.700 h-4.700 v2.200 l-3.800,-3.200 l3.800,-3.200 v2.200 h4.700 v-4.700 h-2.200z" fill="#6fb8e4" stroke="#1f5f8c" stroke-width="1"/></svg>
<svg class="abs" style="left:1336px;top:29px" width="20" height="20" viewBox="0 0 20 20"><g transform="translate(-1.6,-3) scale(1.14)"><path d="M2.500,6 L12,7.500 V18.500 L2.500,16Z" fill="none" stroke="#333" stroke-width="0.85" stroke-linejoin="round"/><path d="M12,7.500 L18,4.500 V14.500 L12,18.500Z" fill="none" stroke="#333" stroke-width="0.85" stroke-linejoin="round"/><path d="M2.500,6 L9,3 L18,4.500 L12,7.500Z" fill="none" stroke="#333" stroke-width="0.85" stroke-linejoin="round"/></g><path transform="translate(-1.6,-3) scale(1.14)" d="M2.500,16 L9,13.500 L18,14.500 M9,3 V13.500" fill="none" stroke="#333" stroke-width=".9"/></svg>
<svg class="abs" style="left:1363px;top:29px" width="20" height="20" viewBox="0 0 20 20"><g transform="translate(-1.6,-3) scale(1.14)"><path d="M2.500,6 L12,7.500 V18.500 L2.500,16Z" fill="none" stroke="#333" stroke-width="0.85" stroke-linejoin="round"/><path d="M12,7.500 L18,4.500 V14.500 L12,18.500Z" fill="none" stroke="#333" stroke-width="0.85" stroke-linejoin="round"/><path d="M2.500,6 L9,3 L18,4.500 L12,7.500Z" fill="none" stroke="#333" stroke-width="0.85" stroke-linejoin="round"/></g><path transform="translate(-1.6,-3) scale(1.14)" d="M2.500,16 L9,13.500 L18,14.500 M9,3 V13.500" fill="none" stroke="#2f7db3" stroke-width="1.100" stroke-dasharray="1.500 1.500"/></svg>
<svg class="abs" style="left:1390px;top:29px" width="20" height="20" viewBox="0 0 20 20"><g transform="translate(-1.6,-3) scale(1.14)"><path d="M2.500,6 L12,7.500 V18.500 L2.500,16Z" fill="#f4f4f4" stroke="#444" stroke-width="0.85" stroke-linejoin="round"/><path d="M12,7.500 L18,4.500 V14.500 L12,18.500Z" fill="#e4e4e4" stroke="#444" stroke-width="0.85" stroke-linejoin="round"/><path d="M2.500,6 L9,3 L18,4.500 L12,7.500Z" fill="#fafafa" stroke="#444" stroke-width="0.85" stroke-linejoin="round"/></g></svg>
<svg class="abs" style="left:1417px;top:29px" width="20" height="20" viewBox="0 0 20 20"><g transform="translate(-1.6,-3) scale(1.14)"><path d="M2.500,6 L12,7.500 V18.500 L2.500,16Z" fill="#5fb0e0" stroke="#10466b" stroke-width="1.2" stroke-linejoin="round"/><path d="M12,7.500 L18,4.500 V14.500 L12,18.500Z" fill="#2f86c0" stroke="#10466b" stroke-width="1.2" stroke-linejoin="round"/><path d="M2.500,6 L9,3 L18,4.500 L12,7.500Z" fill="#8fd0f0" stroke="#10466b" stroke-width="1.2" stroke-linejoin="round"/></g></svg>
<svg class="abs" style="left:1443px;top:29px" width="20" height="20" viewBox="0 0 20 20"><g transform="translate(-1.6,-3) scale(1.14)"><path d="M2.500,5.500 L12,7.500 V18.500 L2.500,16Z" fill="#6fbde8"/><path d="M12,7.500 L18,4.500 V14.500 L12,18.500Z" fill="#4fa2d6"/><path d="M2.500,5.500 L9,3 L18,4.500 L12,7.500Z" fill="#a6dcf6"/></g></svg>
<svg class="abs" style="left:1470px;top:29px" width="20" height="20" viewBox="0 0 20 20"><g transform="translate(-1.6,-3) scale(1.14)"><path d="M2.500,6 L12,7.500 V18.500 L2.500,16Z" fill="#c4c4c4" stroke="#333" stroke-width="0.85" stroke-linejoin="round"/><path d="M12,7.500 L18,4.500 V14.500 L12,18.500Z" fill="#8a8a8a" stroke="#333" stroke-width="0.85" stroke-linejoin="round"/><path d="M2.500,6 L9,3 L18,4.500 L12,7.500Z" fill="#e4e4e4" stroke="#333" stroke-width="0.85" stroke-linejoin="round"/></g><ellipse cx="10" cy="19.300" rx="8" ry="1" fill="#bbb" opacity=".6"/></svg>
<svg class="abs" style="left:1498px;top:29px" width="20" height="20" viewBox="0 0 20 20"><g transform="translate(-1.6,-3) scale(1.14)"><path d="M2.500,6 L12,7.500 V18.500 L2.500,16Z" fill="#f0f0f0" stroke="#444" stroke-width="0.85" stroke-linejoin="round"/><path d="M12,7.500 L18,4.500 V14.500 L12,18.500Z" fill="#dcdcdc" stroke="#444" stroke-width="0.85" stroke-linejoin="round"/><path d="M2.500,6 L9,3 L18,4.500 L12,7.500Z" fill="#f8f8f8" stroke="#444" stroke-width="0.85" stroke-linejoin="round"/></g><path d="M12.500,0.500 l7,-1.500 l-4.500,5.500 l3.500,-0.500 l-10.500,7.500 l4,-6 l-3,0.500z" fill="#f6b820" stroke="#d04010" stroke-width=".9"/></svg>
<svg class="abs" style="left:1525px;top:29px" width="20" height="20" viewBox="0 0 20 20"><ellipse cx="10" cy="18.800" rx="6" ry="1.200" fill="#888" opacity=".5"/><circle cx="10" cy="9.500" r="8.300" fill="#2f80b8" stroke="#1f5f8c" stroke-width=".6"/><circle cx="9" cy="8" r="6" fill="#4f9fd4"/><ellipse cx="7.500" cy="5.800" rx="3.600" ry="2.600" fill="#e6f4fc" opacity=".95"/></svg>
<svg class="abs" style="left:1573px;top:29px" width="20" height="20" viewBox="0 0 20 20"><path d="M3,4.500 L17,1.500 V16 L3,19Z" fill="#4f9fd0" stroke="#1f5f8c" stroke-width="1"/><path d="M10,0 V20" stroke="#111" stroke-width="1.200" stroke-dasharray="4 1.500"/></svg>
<svg class="abs" style="left:1600px;top:29px" width="20" height="20" viewBox="0 0 20 20"><path d="M1,18.500 L19,2" stroke="#1f75ad" stroke-width="2.200" stroke-dasharray="4.500 1.500 1.500 1.500"/></svg>
<svg class="abs" style="left:1627px;top:29px" width="20" height="20" viewBox="0 0 20 20"><path d="M8,12 V3 M8,12 L17,11 M8,12 L2,18" stroke="#222" stroke-width="1.800" fill="none"/><path d="M8,0 l2.800,4.500 h-5.600z M19.500,10.800 l-4.500,3 l-.5,-5.300z M0.500,19.500 l1,-5.200 l4,3.600z" fill="#222"/></svg>
<svg class="abs" style="left:1654px;top:29px" width="20" height="20" viewBox="0 0 20 20"><circle cx="10" cy="10" r="2.800" fill="#4f9fd0" stroke="#1f5f8c" stroke-width="1"/></svg>
<svg class="abs" style="left:1681px;top:29px" width="20" height="20" viewBox="0 0 20 20"><path d="M1,8 l5,-2.500 l5,1.500 v8 l-5,2.500 l-5,-2z" fill="#4f9fd0" stroke="#1f5f8c" stroke-width=".9"/><path d="M6,8.500 v9 M1,8 l5,0.500 l5,-1.500" fill="none" stroke="#1f5f8c" stroke-width=".8"/><path d="M13,15 V5 q0,-3.500 3,-3.500 q3,0 3,3.500 V16 q0,3 -2.500,3 q-2.500,0 -2.500,-3 V6.500" fill="none" stroke="#222" stroke-width="1.200"/></svg>
<div class="vs" style="left:391px;top:24px;height:31px;background:#85878b"></div>
<div class="vs" style="left:548px;top:24px;height:31px;background:#85878b"></div>
<div class="vs" style="left:813px;top:24px;height:31px;background:#85878b"></div>
<div class="vs" style="left:1051px;top:24px;height:31px;background:#85878b"></div>
<div class="vs" style="left:1555px;top:24px;height:31px;background:#85878b"></div>
<div class="vs" style="left:1712px;top:24px;height:31px;background:#85878b"></div>
<div class="abs" style="left:397px;top:28px;width:2px;height:25px;background:repeating-linear-gradient(#8a8c90 0 1.500px,transparent 1.500px 2.700px)"></div>
<div class="abs" style="left:554px;top:28px;width:2px;height:25px;background:repeating-linear-gradient(#8a8c90 0 1.500px,transparent 1.500px 2.700px)"></div>
<div class="abs" style="left:819px;top:28px;width:2px;height:25px;background:repeating-linear-gradient(#8a8c90 0 1.500px,transparent 1.500px 2.700px)"></div>
<div class="abs" style="left:1057px;top:28px;width:2px;height:25px;background:repeating-linear-gradient(#8a8c90 0 1.500px,transparent 1.500px 2.700px)"></div>
<div class="abs" style="left:1561px;top:28px;width:2px;height:25px;background:repeating-linear-gradient(#8a8c90 0 1.500px,transparent 1.500px 2.700px)"></div>
<div class="vs" style="left:1149px;top:28px;height:23px;background:#7d7f83"></div>
<div class="dd" style="left:1240px;top:37px"></div>
</div>

<div id="cmd">
<div class="tc" style="left:50.5px;top:83.0px;letter-spacing:-0.37px;margin-left:0.19px">Basis-Blech/Zunge</div>
<div class="tc" style="left:139.8px;top:83.0px;letter-spacing:-0.47px;margin-left:0.23px">Zu Blech</div>
<div class="tc" style="left:140.4px;top:96.0px;letter-spacing:-0.18px;margin-left:0.09px">konvertieren</div>
<div class="tc" style="left:215.9px;top:83.0px;letter-spacing:-0.26px;margin-left:0.13px">Ausgeformte</div>
<div class="tc" style="left:215.7px;top:96.0px;letter-spacing:-0.11px;margin-left:0.05px">Biegung</div>
<div class="tc" style="left:539.0px;top:83.0px;letter-spacing:-0.81px;margin-left:0.41px">Ecken</div>
<div class="tc" style="left:605.0px;top:83.0px;letter-spacing:-0.32px;margin-left:0.16px">Formwerkzeug</div>
<div class="tc" style="left:697.5px;top:83.0px;letter-spacing:-0.26px;margin-left:0.13px">Blechverstärkung</div>
<div class="tc g" style="left:1063.0px;top:83.0px;letter-spacing:-0.74px;margin-left:0.37px">Keine</div>
<div class="tc g" style="left:1063.6px;top:96.0px;letter-spacing:-0.18px;margin-left:0.09px">Biegungen</div>
<div class="tc" style="left:1121.7px;top:83.0px;letter-spacing:-0.45px;margin-left:0.22px">Schlitz</div>
<div class="tc g" style="left:1176.5px;top:83.0px;letter-spacing:-0.23px;margin-left:0.12px">Biegungen</div>
<div class="tc g" style="left:1176.6px;top:96.0px;letter-spacing:-0.07px;margin-left:0.03px">einfügen</div>
<div class="t" style="left:285.3px;top:63.3px;letter-spacing:-0.66px">Kante-Lasche</div>
<div class="t" style="left:285.3px;top:89.3px;letter-spacing:-0.44px">Gehrung-Lasche</div>
<div class="t" style="left:285.3px;top:115.3px;letter-spacing:-0.19px">Blechkantenrand</div>
<div class="t" style="left:411.6px;top:63.3px;letter-spacing:-0.67px">Knick</div>
<div class="t" style="left:411.6px;top:89.3px;letter-spacing:-0.31px">Skizzierte Biegung</div>
<div class="t" style="left:411.6px;top:115.3px;letter-spacing:-0.46px">Kreuzknick</div>
<div class="t" style="left:778.5px;top:63.3px;letter-spacing:-0.25px">Linear ausgetragener Schnitt</div>
<div class="t" style="left:778.5px;top:89.3px;letter-spacing:-0.19px">Einfache Bohrung</div>
<div class="t" style="left:778.5px;top:115.3px;letter-spacing:-0.24px">Luftdurchlass</div>
<div class="t" style="left:967.5px;top:63.3px;letter-spacing:-0.18px">Entfalten</div>
<div class="t" style="left:967.5px;top:89.3px;letter-spacing:-0.38px">Falten</div>
<div class="t" style="left:967.5px;top:115.3px;letter-spacing:-0.21px">Abwickeln</div>
<div class="vs" style="left:255px;top:57px;height:78px"></div>
<div class="vs" style="left:517px;top:57px;height:78px"></div>
<div class="vs" style="left:560px;top:57px;height:78px"></div>
<div class="vs" style="left:748px;top:57px;height:78px"></div>
<div class="vs" style="left:937px;top:57px;height:78px"></div>
<div class="vs" style="left:1098px;top:57px;height:78px"></div>
<div class="dd" style="left:536px;top:123px"></div>
<svg class="abs" style="left:39px;top:62px" width="21" height="19" viewBox="0 0 21 19"><path d="M1.200,2.200 L3.600,2.200 L6.700,5.500 L6.700,11.400 L10.300,11.400 L14.100,7.300 L14.100,1.100 L17.700,1.100 L19.900,3.500 L19.900,11.400 L13.800,17.600 L8.200,17.600 L1.200,10.400Z" fill="#f8f8f8" stroke="#222" stroke-width="1.100" stroke-linejoin="round"/><path d="M1.200,2.200 L4.600,5.800 V11.900 M4.600,5.800 L6.700,5.500 M17.600,3.500 V9.400 M14.100,1.100 Q15,3 17.600,3.500 L19.900,3.500" fill="none" stroke="#777" stroke-width=".8"/><path d="M14.400,7.300 L17.700,10.400 L13.500,14.600 L10.300,11.400Z" fill="#5fa4cc" stroke="#0d3f63" stroke-width="1.100" stroke-linejoin="round"/><path d="M6.400,12.200 L9.800,15.300" stroke="#0d4f7a" stroke-width="1.500"/><path d="M10.300,15.300 L13.100,15.500" stroke="#999" stroke-width=".8"/></svg>
<svg class="abs" style="left:130px;top:62px" width="21" height="20" viewBox="0 0 21 20"><path d="M2.300,13.700 L11.900,11.400 L16.700,14.500 L16.500,16.100 L8,19.600 L1,13Z" fill="#fafafa" stroke="#333" stroke-width="1" stroke-linejoin="round"/><path d="M3.500,14.800 L8,18.300 L15.500,15.200" fill="none" stroke="#bbb" stroke-width=".7"/><path d="M1,2.700 L10.600,2.300 L11.300,8.100 L1,8.900Z" fill="#f6f6f6" stroke="#333" stroke-width="1" stroke-linejoin="round"/><path d="M3.400,4.600 L10.100,4.200 L10.300,7.600 L3.400,8.200Z" fill="#ececec" stroke="#888" stroke-width=".7"/><path d="M14.400,3.500 L19.800,4.600 V12.500 L14.200,11.200Z" fill="#f2f2f2" stroke="#333" stroke-width="1" stroke-linejoin="round"/><path d="M15.600,5.300 L18,5.900 V11 L15.600,10.400Z" fill="#e6e6e6" stroke="#999" stroke-width=".6"/><path d="M1,8.900 L11.300,8.100 L10.600,1.200 L13.900,1.400 L13.900,11.400 L2.500,14 L1,13.200Z" fill="#0d5280"/><path d="M2.300,10.300 L2.300,12.200 M3.800,11 L12,9.700 M12.300,2.400 V9.300" stroke="#7cc8ee" stroke-width="1.100" fill="none"/><path d="M13.900,11.400 L15.200,13.400" stroke="#333" stroke-width="1"/></svg>
<svg class="abs" style="left:207px;top:62px" width="19" height="20" viewBox="0 0 19 20"><defs><linearGradient id="gAus" x1="0" y1="0" x2="0" y2="1"><stop offset="0" stop-color="#8fd4fa"/><stop offset="1" stop-color="#3f7ea8"/></linearGradient></defs><ellipse cx="9.400" cy="2.500" rx="4.400" ry="1.900" fill="#fff" stroke="#2a2a2a" stroke-width="1.100"/><rect x="8.800" y="4.700" width="1.300" height="7.300" fill="#fff"/><path d="M5.100,3.700 L8.800,4.700 L8.800,18.900 L1.900,15 L1.900,14 L5.100,10.600Z" fill="url(#gAus)" stroke="#0d3f63" stroke-width="1" stroke-linejoin="round"/><path d="M13.700,3.700 L10.100,4.700 L10.100,18.900 L17,15 L17,14 L13.700,10.600Z" fill="url(#gAus)" stroke="#0d3f63" stroke-width="1" stroke-linejoin="round"/><path d="M8.800,12.300 H10.100" stroke="#333" stroke-width="1"/></svg>
<svg class="abs" style="left:259px;top:60px" width="20" height="19" viewBox="0 0 20 19"><path d="M9.900,9.600 L12,8 L18.600,13.300 V15.700 L12.200,17.300 L9.900,15.300Z" fill="#fafafa" stroke="#333" stroke-width="1" stroke-linejoin="round"/><path d="M12.200,15.600 L18.600,13.300" stroke="#333" stroke-width=".8"/><path d="M1.300,1.400 L5.400,1 L9.900,5.100 V15.300 L12.200,15.700 V17.200 L9.900,18.300 L7.300,17.900 L1.300,11.500Z" fill="#86c4e6" stroke="#0d4f7a" stroke-width="1.100" stroke-linejoin="round"/><path d="M1.300,1.400 L7.650,6.200 V17.500 M7.650,6.200 L9.900,5.100 M1.300,8.600 L7.650,13.600 M7.650,15.500 L9.900,15.300" fill="none" stroke="#0d4f7a" stroke-width=".9"/><path d="M8.700,6.500 V15" stroke="#c8e8f8" stroke-width=".9"/></svg>
<svg class="abs" style="left:259px;top:86px" width="20" height="20" viewBox="0 0 20 20"><defs><linearGradient id="gGe" x1="0" y1="0" x2="1" y2="1"><stop offset="0" stop-color="#fff"/><stop offset="1" stop-color="#d8d8d8"/></linearGradient></defs><path d="M1.300,1.300 H18.600 V7.300 H7.300 V18.600 H1.300Z" fill="#8fd0f0" stroke="#0d4f7a" stroke-width="1.100"/><rect x="7.300" y="7.300" width="11.300" height="11.300" fill="url(#gGe)" stroke="#333" stroke-width="1.100"/><path d="M1.300,1.300 L7.300,7.300" stroke="#e8f6fc" stroke-width="1.100"/></svg>
<svg class="abs" style="left:258px;top:112px" width="22" height="19" viewBox="0 0 22 19"><path d="M16.500,2.800 Q21.500,4.500 21,9.500 Q20.500,14.500 15.800,16.700 V13.700 Q17.500,12 17.300,9.500 Q17,7 16.500,5.400Z" fill="#4f9ccc" stroke="#0d4f7a" stroke-width="1"/><path d="M8,7 L16,11.500 L17.300,9.500" fill="#3f86b4" stroke="none"/><path d="M1.100,12.200 L6.800,9.200 L15.800,13.700 V15.900 L11.300,18.600 L1.100,14.400Z" fill="#fafafa" stroke="#333" stroke-width="1" stroke-linejoin="round"/><path d="M1.100,12.200 L11.300,16.300 L15.800,13.700 M11.300,16.300 V18.600" fill="none" stroke="#333" stroke-width=".8"/><path d="M1.100,1.600 L8.300,0.200 L16.500,2.800 V5.400 L10.900,8 L1.100,4.300Z" fill="#7cc0e6" stroke="#0d4f7a" stroke-width="1" stroke-linejoin="round"/><path d="M1.100,1.600 L10.900,5.400 L16.500,2.800 M10.900,5.400 V8" fill="none" stroke="#0d4f7a" stroke-width=".9"/><path d="M1.100,4.300 L10.900,8 V5.400 L1.100,1.600Z" fill="#3f86b4" stroke="#0d4f7a" stroke-width=".8"/></svg>
<svg class="abs" style="left:386px;top:60px" width="19" height="20" viewBox="0 0 19 20"><path d="M7.900,1.400 L11.300,0.400 L17.700,2.100 L16.500,5.100 L14.300,4.400Z" fill="#fafafa" stroke="#333" stroke-width="1" stroke-linejoin="round"/><path d="M17.700,2.100 V4.200 L16.500,7 V5.100" fill="#fafafa" stroke="#333" stroke-width=".8"/><path d="M6,2.900 L7.900,1.400 L14.300,4.400 L13.900,7.800 L5.600,5.500Z" fill="#3f96cc" stroke="#0d4f7a" stroke-width=".9" stroke-linejoin="round"/><path d="M5.600,5.500 L13.900,7.800 V12.300 L5.300,10.400Z" fill="#f0f0f0" stroke="#333" stroke-width="1" stroke-linejoin="round"/><path d="M13.900,7.800 L14.300,4.400 L16,5.200 V13.500 L13.900,15.300Z" fill="#2f7db3" stroke="#0d4f7a" stroke-width=".8"/><path d="M5.300,10.400 L13.900,12.300 V15.300 L10.900,16.800 L3,11.500Z" fill="#3f96cc" stroke="#0d4f7a" stroke-width=".9" stroke-linejoin="round"/><path d="M0.500,13.400 L3,11.500 L10.900,15.300 L10.200,17.900 L7.500,19.400 L0.500,15.300Z" fill="#fafafa" stroke="#333" stroke-width="1" stroke-linejoin="round"/><path d="M0.500,13.400 L7.800,17.200 L10.900,15.300 M7.800,17.200 L7.500,19.400" fill="none" stroke="#333" stroke-width=".8"/></svg>
<svg class="abs" style="left:385px;top:86px" width="21" height="20" viewBox="0 0 21 20"><path d="M4,2.500 L12,1 L14,2.500 V8 L4,9.500Z" fill="#f4f5f7" stroke="#333" stroke-width="1" stroke-linejoin="round"/><path d="M4,9.500 L14,8 L16,12 L7,14Z" fill="#6fbde8" stroke="#1f5f8c"/><path d="M7,14 L16,12 L20,15 V17 L10,19.500 L7,17Z" fill="#f4f5f7" stroke="#333" stroke-width="1" stroke-linejoin="round"/><path d="M0.500,12.500 L18,9.500" stroke="#2f7db3" stroke-width=".9"/><path d="M4,2.500 V9.500 L7,14 V17" fill="none" stroke="#333"/></svg>
<svg class="abs" style="left:385px;top:114px" width="21" height="17" viewBox="0 0 21 17"><path d="M1,7 L12,1.500 L20,7.500 V9.500 L9,15.500 L1,9Z" fill="#f4f5f7" stroke="#333" stroke-width="1" stroke-linejoin="round"/><path d="M1,7 L9,13 L20,7.500 M9,13 V15.500" fill="none" stroke="#333" stroke-width=".9"/><path d="M1,7 L20,7.500 M12,1.500 L9,13" stroke="#2f7db3" stroke-width=".9"/></svg>
<svg class="abs" style="left:530px;top:62px" width="18" height="20" viewBox="0 0 18 20"><path d="M2,6.500 L8.500,1 L12,2 V10 L17,13 V15.500 L9,19 L2,14Z" fill="#f4f5f7" stroke="#333" stroke-width="1" stroke-linejoin="round"/><path d="M2,6.500 L8.500,1 L10,2.800 L3.500,8.500Z" fill="#4f9fd0" stroke="#1f5f8c" stroke-width=".8"/><path d="M3.500,8.500 V12 Q5,13 6,12 L9,16.500 M6,12 L12,10" fill="none" stroke="#999" stroke-width=".7"/></svg>
<svg class="abs" style="left:595px;top:62px" width="21" height="20" viewBox="0 0 21 20"><path d="M8.500,9 h4 v9 q-2,2 -4,0z" fill="#f4f5f7" stroke="#333" stroke-width="1" stroke-linejoin="round"/><path d="M1,7.500 Q4,5.500 7,4.500 Q8.500,1.500 10.500,1.500 Q12.500,1.500 14,4.500 Q17,5.500 20,7.500 L19,9.500 Q16,7.500 14.500,9 L13,10.500 H8 L6.500,9 Q5,7.500 2,9.500Z" fill="#4f9fd0" stroke="#1f5f8c" stroke-width="1"/><path d="M7,4.500 Q10.500,6.500 14,4.500" fill="none" stroke="#cfe8f6" stroke-width="1"/></svg>
<svg class="abs" style="left:686px;top:62px" width="22" height="20" viewBox="0 0 22 20"><path d="M12,2 L16,1 L21,2.500 V11 L10,19 L1,14 V11.500 L5,9.500 L12,11Z" fill="#f4f5f7" stroke="#333" stroke-width="1" stroke-linejoin="round"/><path d="M16,1 V9.500 L12,11 M16,9.500 L21,11" fill="none" stroke="#888" stroke-width=".7"/><path d="M7,13 L14.500,2.500 L17,3 L17,6 L10.500,15Z" fill="#4f9fd0" stroke="#1f5f8c" stroke-width=".9"/></svg>
<svg class="abs" style="left:754px;top:61px" width="17" height="19" viewBox="0 0 17 19"><path d="M1,4 L11,1 L16,2.500 V14 L5,18.500 L1,16Z" fill="#f4f5f7" stroke="#333" stroke-width="1" stroke-linejoin="round"/><path d="M4,5 L13,3 V13 L4,16Z" fill="#f4f5f7" stroke="#333" stroke-width="1" stroke-linejoin="round"/><path d="M6.500,7 L11,6 V11.500 L6.500,13Z" fill="#2f86c0" stroke="#1f5f8c" stroke-width=".9"/><path d="M9,6.500 v4 h-2.500" fill="none" stroke="#dff0fb" stroke-width="1"/></svg>
<svg class="abs" style="left:754px;top:87px" width="17" height="19" viewBox="0 0 17 19"><path d="M1,5 L11,1.500 L16,3.500 V14 L5,18.500 L1,16Z" fill="#f4f5f7" stroke="#333" stroke-width="1" stroke-linejoin="round"/><path d="M5,7 L16,3.500 M5,7 V18.500 M5,7 L1,5" fill="none" stroke="#333" stroke-width=".8"/><ellipse cx="10.500" cy="11" rx="2.800" ry="3.200" fill="#2f86c0" stroke="#1f5f8c" stroke-width=".9"/><path d="M10.500,11 L12.500,9.500" stroke="#dff0fb"/></svg>
<svg class="abs" style="left:754px;top:114px" width="16" height="17" viewBox="0 0 16 17"><rect x="1" y="1.500" width="14" height="14.500" fill="#f4f5f7" stroke="#222" stroke-width="1.300"/><circle cx="8" cy="8.700" r="5" fill="none" stroke="#222" stroke-width=".9"/><circle cx="8" cy="8.700" r="2.300" fill="#222"/><path d="M1,8.700 h14 M8,1.500 v14.500 M2.500,3 l11,11.500 M13.500,3 l-11,11.500" stroke="#222" stroke-width=".8"/></svg>
<svg class="abs" style="left:940px;top:60px" width="22" height="20" viewBox="0 0 22 20"><path d="M10,4 L15,1 L20,2.500 V11 L15,14 L10,12.500Z" fill="#eceef1" stroke="#777" stroke-width=".9"/><path d="M15,1 V10 L10,12.500 M15,10 L20,11" fill="none" stroke="#999" stroke-width=".7"/><path d="M3,13.500 L12,11.500 L20,13 L11,19.500 L3,16Z" fill="#4f9fd0" stroke="#1f5f8c" stroke-width=".9"/><path d="M3,13.500 L11,16.500 L20,13 M11,16.500 V19.500" fill="none" stroke="#1f5f8c" stroke-width=".7"/><path d="M8,2.500 Q2,5 4,11.500" fill="none" stroke="#111" stroke-width="2.200"/><path d="M1,9.500 L8,9 L5.500,15Z" fill="#111"/></svg>
<svg class="abs" style="left:940px;top:86px" width="22" height="21" viewBox="0 0 22 21"><path d="M10,4 L15,1 L20,2.500 V12 L15,15 L10,13.500Z" fill="#eceef1" stroke="#777" stroke-width=".9"/><path d="M11,6 L14,4.500 V12.500 L11,13.500Z" fill="#2f86c0" stroke="#1f5f8c" stroke-width=".7"/><path d="M3,15.500 L10,13.500 L19,15 L11,20 L3,17.500Z" fill="#eceef1" stroke="#888" stroke-width=".9"/><path d="M5,14 Q1,8 7,4.500" fill="none" stroke="#111" stroke-width="2.200"/><path d="M5,1.500 L11,4.500 L5.500,8.500Z" fill="#111"/></svg>
<svg class="abs" style="left:941px;top:115px" width="21" height="16" viewBox="0 0 21 16"><path d="M1,6.500 L12,1.500 L20,6.500 V9 L9,14.500 L1,9Z" fill="#f4f5f7" stroke="#333" stroke-width="1" stroke-linejoin="round"/><path d="M1,6.500 L9,12 L20,6.500 M9,12 V14.500 M5,4.700 L13,10 M8.500,3.100 L16.500,8.300" fill="none" stroke="#333" stroke-width=".8"/></svg>
<svg class="abs" style="left:1052px;top:61px" width="21" height="21" viewBox="0 0 21 21"><path d="M6,5 L12,2 L17,3.500 V10 L12,12.500 L6,10.500Z" fill="#dfe1e5" stroke="#c3c6cb"/><path d="M12,2 V9.500 L6,10.500 M12,9.500 L17,10" fill="none" stroke="#c3c6cb" stroke-width=".8"/><path d="M1,13 L8,10.500 L16,13 L9,17.500 L1,15.500Z" fill="#e4e6e9" stroke="#c3c6cb"/><circle cx="15.500" cy="15.500" r="3.800" fill="#dfe1e5" stroke="#b9bcc1" stroke-width="1.600"/><path d="M13,13 L18,18" stroke="#b9bcc1" stroke-width="1.600"/></svg>
<svg class="abs" style="left:1111px;top:62px" width="21" height="20" viewBox="0 0 21 20"><path d="M1.500,5 L9,1 L19,4 V14 L12,19 L1.500,13Z" fill="#f4f5f7" stroke="#222" stroke-width="1.200" stroke-linejoin="round"/><path d="M4,6.500 L9,3.500 L16,6 L11,9.500Z" fill="#fff" stroke="#222" stroke-width="1"/><path d="M1.500,5 L4,6.500 M19,4 L16,6 M11,9.500 L12,19 M4,6.500 L8,13.500 L11,9.500" fill="none" stroke="#222" stroke-width=".9"/><path d="M13,9 L19,5 V14 L12.300,18.700Z" fill="#2f86c0" stroke="#1f5f8c" stroke-width=".8"/><path d="M15,9.500 V16" stroke="#9fd0ee" stroke-width="1.600"/></svg>
<svg class="abs" style="left:1166px;top:61px" width="21" height="21" viewBox="0 0 21 21"><path d="M8,4.500 L14,1.500 L19,3 V10 L14,12.500 L8,10.500Z" fill="#dfe1e5" stroke="#c3c6cb"/><path d="M14,1.500 V9.500 L8,10.500 M14,9.500 L19,10" fill="none" stroke="#c3c6cb" stroke-width=".8"/><path d="M1,13 L9,10.500 L17,13 V15 L9,19.500 L1,15.500Z" fill="#e4e6e9" stroke="#c3c6cb"/><path d="M17,13 Q20,12 19,9" fill="none" stroke="#c3c6cb"/></svg>
</div>

<div id="tabs">
<div class="tab" style="left:0;width:52px;text-align:left;padding-left:0;letter-spacing:-0.2px;text-indent:-0.5px">Features</div>
<div class="tab" style="left:52px;width:56px;letter-spacing:-0.7px">Skizze</div>
<div class="tab act" style="left:108px;width:56px">Blech</div>
<div class="tab" style="left:164px;width:140px">Schweißkonstruktionen</div>
<div class="tab" style="left:304px;width:111px">Netzmodellierung</div>
<div class="tab" style="left:415px;width:70px">Evaluieren</div>
<div class="tab" style="left:485px;width:117px">MBD-Dimensionen</div>
<div class="tab" style="left:602px;width:201px;letter-spacing:-0.45px">SOLIDWORKS Zusatzanwendungen</div>
</div>

<svg id="model" width="1802" height="1011" viewBox="0 0 1802 1011" style="position:absolute;left:0;top:0">
<defs>
<linearGradient id="gF" x1="974" x2="1003" y1="0" y2="0" gradientUnits="userSpaceOnUse"><stop offset="0" stop-color="#c9cdfc"/><stop offset=".25" stop-color="#c2c6f6"/><stop offset=".58" stop-color="#a7abcf"/><stop offset="1" stop-color="#b1b5d9"/></linearGradient>
<linearGradient id="gR" x1="536" x2="656" y1="0" y2="0" gradientUnits="userSpaceOnUse"><stop offset="0" stop-color="#afb3d7"/><stop offset=".45" stop-color="#aeb2d6"/><stop offset=".8" stop-color="#c6cafa"/><stop offset="1" stop-color="#cdd1fd"/></linearGradient>
<linearGradient id="gL" x1="435" x2="460" y1="0" y2="0" gradientUnits="userSpaceOnUse"><stop offset="0" stop-color="#9da1c4"/><stop offset="1" stop-color="#aeb2d6"/></linearGradient>
</defs>
<path d="M1102.4,783.4 L1754.3,443.6 L1754.3,473.1 L1102.4,812.9Z" fill="#cfd4fd"/>
<path d="M1002.8,732.0 L1102.4,783.4 L1102.4,812.9 L1002.8,760.2Z" fill="#aeb3d6"/>
<path d="M641.3,541.8 L795.0,622.3 L795.0,651.8 L641.3,571.3Z" fill="#aeb3d6"/>
<path d="M655.2,899.5 L655.2,929.0 L981.2,758.6 Q978.6,746 972.9,734.4 Z" fill="#cfd4fd"/>
<path d="M972.9,734.4 Q985.5,727.6 998,729.3 L1002.8,732 L1002.8,760.2 Q991,755.2 981.2,758.6 Q978.6,746 972.9,734.4Z" fill="url(#gF)"/>
<path d="M655.2,899.5 L651.1,901.4 L646.9,903.3 L642.3,905.0 L637.6,906.5 L632.7,907.9 L627.7,909.0 L622.5,910.1 L617.2,910.9 L611.8,911.5 L606.3,912.0 L600.7,912.3 L595.2,912.4 L589.7,912.3 L584.1,912.0 L578.6,911.5 L573.2,910.8 L567.9,910.0 L562.7,909.0 L557.7,907.8 L552.8,906.4 L548.1,904.8 L543.5,903.1 L539.3,901.3 L535.2,899.3 L535.2,928.8 L539.3,930.8 L543.5,932.6 L548.1,934.3 L552.8,935.9 L557.7,937.3 L562.7,938.5 L567.9,939.5 L573.2,940.3 L578.6,941.0 L584.1,941.5 L589.7,941.8 L595.2,941.9 L600.7,941.8 L606.3,941.5 L611.8,941.0 L617.2,940.4 L622.5,939.6 L627.7,938.5 L632.7,937.4 L637.6,936.0 L642.3,934.5 L646.9,932.8 L651.1,930.9 L655.2,929.0Z" fill="url(#gR)"/>
<path d="M535.2,899.3 L459.8,859.8 L459.8,889.3 L535.2,928.8Z" fill="#afb3d7"/>
<path d="M459.8,859.8 L457.9,858.8 L456.0,857.7 L454.2,856.6 L452.5,855.4 L450.8,854.3 L449.2,853.1 L447.7,851.8 L446.3,850.6 L445.0,849.3 L443.7,848.0 L442.5,846.7 L441.4,845.4 L440.4,844.0 L439.5,842.7 L438.6,841.3 L437.8,839.9 L437.2,838.5 L436.6,837.1 L436.1,835.6 L435.7,834.2 L435.4,832.8 L435.1,831.3 L435.0,829.9 L434.9,828.4 L434.9,857.9 L435.0,859.4 L435.1,860.8 L435.4,862.3 L435.7,863.7 L436.1,865.1 L436.6,866.6 L437.2,868.0 L437.8,869.4 L438.6,870.8 L439.5,872.2 L440.4,873.5 L441.4,874.9 L442.5,876.2 L443.7,877.5 L445.0,878.8 L446.3,880.1 L447.7,881.3 L449.2,882.6 L450.8,883.8 L452.5,884.9 L454.2,886.1 L456.0,887.2 L457.9,888.3 L459.8,889.3Z" fill="url(#gL)"/>
<path d="M641.3,541.8 L1293.2,202.0 L1754.3,443.6 L1102.4,783.4 L1002.8,732.0 L998.0,729.3 L995.5,729.0 L993.0,729.0 L990.5,729.0 L988.0,729.3 L985.5,729.7 L983.0,730.3 L980.5,731.1 L977.9,732.0 L975.4,733.1 L972.9,734.4 L655.2,899.5 L655.2,899.5 L651.1,901.4 L646.9,903.3 L642.3,905.0 L637.6,906.5 L632.7,907.9 L627.7,909.0 L622.5,910.1 L617.2,910.9 L611.8,911.5 L606.3,912.0 L600.7,912.3 L595.2,912.4 L589.7,912.3 L584.1,912.0 L578.6,911.5 L573.2,910.8 L567.9,910.0 L562.7,909.0 L557.7,907.8 L552.8,906.4 L548.1,904.8 L543.5,903.1 L539.3,901.3 L535.2,899.3 L459.8,859.8 L456.0,857.7 L452.5,855.4 L449.2,853.1 L446.3,850.6 L443.7,848.0 L441.4,845.4 L439.5,842.7 L437.8,839.9 L436.6,837.1 L435.7,834.2 L435.1,831.3 L434.9,828.4 L435.1,825.5 L435.7,822.6 L436.6,819.8 L437.8,816.9 L439.5,814.2 L441.4,811.4 L443.7,808.8 L446.3,806.2 L449.2,803.8 L452.5,801.4 L456.0,799.2 L459.8,797.1 L795.0,622.3Z" fill="#b7bcdf"/>
<path d="M641.3,541.8 L1293.2,202.0 L1754.3,443.6 L1102.4,783.4 L795.0,622.3 M795.0,622.3 L459.8,797.1 L459.8,797.1 L456.0,799.2 L452.5,801.4 L449.2,803.8 L446.3,806.2 L443.7,808.8 L441.4,811.4 L439.5,814.2 L437.8,816.9 L436.6,819.8 L435.7,822.6 L435.1,825.5 L434.9,828.4 L435.1,831.3 L435.7,834.2 L436.6,837.1 L437.8,839.9 L439.5,842.7 L441.4,845.4 L443.7,848.0 L446.3,850.6 L449.2,853.1 L452.5,855.4 L456.0,857.7 L459.8,859.8 L535.2,899.3 L539.3,901.3 L543.5,903.1 L548.1,904.8 L552.8,906.4 L557.7,907.8 L562.7,909.0 L567.9,910.0 L573.2,910.8 L578.6,911.5 L584.1,912.0 L589.7,912.3 L595.2,912.4 L600.7,912.3 L606.3,912.0 L611.8,911.5 L617.2,910.9 L622.5,910.1 L627.7,909.0 L632.7,907.9 L637.6,906.5 L642.3,905.0 L646.9,903.3 L651.1,901.4 L655.2,899.5 L972.9,734.4 M972.9,734.4 Q985.5,727.6 998,729.3 M972.9,734.4 Q978.6,746 981.2,758.6 M1002.8,732 L1002.8,760.2 M729.0,656.7 L924.4,759.1 M924.4,759.1 L924.4,788.6 M1754.3,443.6 L1754.3,473.1 M1102.4,783.4 L1102.4,812.9 M655.2,899.5 L655.2,929.0 M535.2,899.3 L535.2,928.8 M459.8,859.8 L459.8,889.3 M434.9,828.4 L434.9,857.9 M1754.3,473.1 L1102.4,812.9 L1002.8,760.2 Q991,755.2 981.2,758.6 L655.2,929.0 M655.2,929.0 L651.1,930.9 L646.9,932.8 L642.3,934.5 L637.6,936.0 L632.7,937.4 L627.7,938.5 L622.5,939.6 L617.2,940.4 L611.8,941.0 L606.3,941.5 L600.7,941.8 L595.2,941.9 L589.7,941.8 L584.1,941.5 L578.6,941.0 L573.2,940.3 L567.9,939.5 L562.7,938.5 L557.7,937.3 L552.8,935.9 L548.1,934.3 L543.5,932.6 L539.3,930.8 L535.2,928.8 L459.8,889.3 L457.9,888.3 L456.0,887.2 L454.2,886.1 L452.5,884.9 L450.8,883.8 L449.2,882.6 L447.7,881.3 L446.3,880.1 L445.0,878.8 L443.7,877.5 L442.5,876.2 L441.4,874.9 L440.4,873.5 L439.5,872.2 L438.6,870.8 L437.8,869.4 L437.2,868.0 L436.6,866.6 L436.1,865.1 L435.7,863.7 L435.4,862.3 L435.1,860.8 L435.0,859.4 L434.9,857.9" fill="none" stroke="#000" stroke-width="1.45" stroke-linejoin="round" stroke-linecap="round"/>
<path d="M767.4,636.9 L641.3,571.3 L641.3,541.8 L795.0,622.3" fill="none" stroke="#e8000a" stroke-width="1.3" stroke-linejoin="round"/>
<path d="M767.4,636.9 L795.0,651.8 L795.0,622.3" fill="none" stroke="#f0475f" stroke-width="1.3"/>
<g stroke="#0a12f0" stroke-width="1.2" fill="#0a12f0"><path d="M1102.4,784.5 V760" fill="none"/><path d="M1102.4,757 l2.6,7 h-5.2z" stroke="none"/><path d="M1102.4,784.5 l8,-4" fill="none"/><path d="M1114.5,777.6 l-6.5,0.6 l2.6,4.6z" stroke="none"/><path d="M1099,781 l7,7 M1106,781 l-7,7 M1098,784.5 h9" fill="none" stroke-width="1"/></g>
</svg>
<div id="hud">
<svg class="abs" style="left:897px;top:143px" width="19" height="20" viewBox="0 0 19 20"><path d="M1,14.500 L9,12 L18,14.500 L8,18.500Z" fill="#4f9fd0" stroke="#2f6f9c" stroke-width=".8"/><path d="M9.500,15 V4" stroke="#2d4a60" stroke-width="2"/><path d="M9.500,0.500 l3.500,4.500 h-7z" fill="#2d4a60"/></svg>
<svg class="abs" style="left:922px;top:143px" width="20" height="20" viewBox="0 0 20 20"><circle cx="12.500" cy="7" r="5.600" fill="#a9d8f8" fill-opacity=".75" stroke="#4b6a80" stroke-width="1.100"/><path d="M8.500,11.500 L3,17.500" stroke="#3f88b8" stroke-width="2.600" stroke-linecap="round"/><path d="M8.500,11.500 L3,17.500" stroke="#a6d4f0" stroke-width="1" stroke-linecap="round"/><path d="M12.500,3.200 l1.300,1.600 h-2.600z M12.500,10.800 l1.300,-1.600 h-2.600z M8.700,7 l1.600,-1.300 v2.600z M16.300,7 l-1.600,-1.300 v2.600z" fill="#2d4a60"/></svg>
<svg class="abs" style="left:948px;top:143px" width="20" height="20" viewBox="0 0 20 20"><rect x="6.500" y="1" width="12.500" height="12.500" fill="none" stroke="#2d4a60" stroke-width="1.200" stroke-dasharray="3 2"/><circle cx="11.500" cy="8" r="5.800" fill="#b4dcf8" fill-opacity=".85" stroke="#5b7a90" stroke-width="1"/><path d="M7.500,12.500 L2.500,18" stroke="#3f88b8" stroke-width="2.600" stroke-linecap="round"/><path d="M7.500,12.500 L2.500,18" stroke="#a6d4f0" stroke-width="1" stroke-linecap="round"/></svg>
<svg class="abs" style="left:975px;top:143px" width="20" height="20" viewBox="0 0 20 20"><path d="M1.500,13.500 l11,-11 l4,3.500 l-10,12 q-3.500,.5 -5,-4.500z" fill="#c4dcec" stroke="#5b7a90" stroke-width="1"/><path d="M9,7 l3.500,3.500" stroke="#5b7a90"/><path d="M19.500,13 h-6.500 v-2.500 l-4.500,3.800 l4.500,3.800 v-2.500 h6.500z" fill="#2f7db3"/></svg>
<svg class="abs" style="left:1001px;top:143px" width="19" height="20" viewBox="0 0 19 20"><path d="M1,7 q0,-4 8.500,-4 q8.500,0 8.500,4 v8.500 h-5 v-8 q-3.500,-1 -7,0 v10.500 h-5z" fill="#b8d4e6" stroke="#3d5a70" stroke-width="1"/><path d="M1,7.500 l5,1.500 v10 l-5,-2z" fill="#2f7db3" stroke="#123e5c" stroke-width=".9"/><path d="M13,8.500 l5,-1.500 v8.500 l-5,1.500z" fill="#2f7db3" stroke="#123e5c" stroke-width=".9"/><path d="M1.500,11 l4,-1.500 M1.500,14 l4,-1.500 M1.500,17 l4,-1.500 M13.500,11 l4,-1.500 M13.500,14 l4,-1.500" stroke="#a8d4f0" stroke-width=".9"/></svg>
<svg class="abs" style="left:1026px;top:142px" width="20" height="21" viewBox="0 0 20 21"><path d="M1.500,7 L7,1.500 H19 V13.500 L13.500,19.500 H1.500Z" fill="#8ac4ec" fill-opacity=".6" stroke="#2d4a60" stroke-width="1.100" stroke-linejoin="round"/><rect x="1.500" y="7" width="12" height="12.500" fill="#4a9cd0" stroke="#1f4f78" stroke-width="1.200"/><path d="M13.500,7 L19,1.500" stroke="#2d4a60" stroke-width="1"/><path d="M10,2 v3.500 M8.300,4 l1.700,1.800 l1.700,-1.800 M18.500,10.500 h-3.500 M16.500,8.800 l-1.800,1.700 l1.800,1.700" stroke="#2d4a60" stroke-width="1.100" fill="none"/></svg>
<svg class="abs" style="left:1067px;top:142px" width="19" height="21" viewBox="0 0 19 21"><path d="M1.500,4.500 L9,1.500 L17.500,4 V16 L6.500,20 L1.500,17Z" fill="#6eb4e0" stroke="#2d4a60" stroke-width="1" stroke-linejoin="round"/><path d="M6.500,7 L12,5.500 V18 L6.500,20Z" fill="#3f8fc2"/><path d="M12,5.500 L17.500,4 V16 L12,18Z" fill="#e4f0f8"/><path d="M1.500,4.500 L6.500,7 L17.500,4 M6.500,7 V20" fill="none" stroke="#2d4a60" stroke-width="1"/></svg>
<svg class="abs" style="left:1107px;top:144px" width="20" height="18" viewBox="0 0 20 18"><path d="M1,9 q9,-9 18,0 q-9,8 -18,0z" fill="#b4d8f0" stroke="#4b6a80" stroke-width=".9"/><circle cx="10" cy="8.500" r="4" fill="#3d5a70"/><circle cx="10" cy="8.500" r="1.800" fill="#1d3a50"/><path d="M10,1.500 v15.500" stroke="#2d4a60" stroke-width="1"/></svg>
<svg class="abs" style="left:1147px;top:142px" width="21" height="22" viewBox="0 0 21 22"><circle cx="8" cy="8" r="7.500" fill="#e8c838"/><path d="M8,8 L8,0.500 A7.500,7.500 0 0 0 0.500,8Z" fill="#3a78d8"/><path d="M8,8 L0.500,8 A7.500,7.500 0 0 0 10,15.200Z" fill="#38a848"/><path d="M8,8 L8,0.500 A7.500,7.500 0 0 1 15.500,8Z" fill="#d84848"/><ellipse cx="5.500" cy="4" rx="2.600" ry="1.800" fill="#fff" opacity=".55"/><path d="M6,21 l1.500,-5 l8,-7.500 l3,3 l-8,7.500z" fill="#f0dc6c" stroke="#444" stroke-width=".9"/><path d="M15.500,8.500 l1.500,-1.500 l3,3 l-1.500,1.500z" fill="#e05050" stroke="#444" stroke-width=".6"/><path d="M6,21 l.7,-2.300 l1.600,1.500z" fill="#222"/></svg>
<svg class="abs" style="left:1172px;top:142px" width="20" height="22" viewBox="0 0 20 22"><rect x="0.500" y="8.500" width="19" height="12.500" fill="#2d3a48"/><g fill="#e8eef4"><rect x="2" y="13" width="3" height="2.500"/><rect x="8" y="13" width="3" height="2.500"/><rect x="14" y="13" width="3" height="2.500"/><rect x="4.500" y="16.500" width="3.500" height="3"/><rect x="11.500" y="16.500" width="3.500" height="3"/><rect x="1" y="10" width="2.500" height="2"/><rect x="16.500" y="10" width="2.500" height="2"/></g><g transform="translate(2,0)"><circle cx="8" cy="8" r="7.500" fill="#e8c838"/><path d="M8,8 L8,0.500 A7.500,7.500 0 0 0 0.500,8Z" fill="#3a78d8"/><path d="M8,8 L0.500,8 A7.500,7.500 0 0 0 10,15.200Z" fill="#38a848"/><path d="M8,8 L8,0.500 A7.500,7.500 0 0 1 15.500,8Z" fill="#d84848"/><ellipse cx="5.500" cy="4" rx="2.600" ry="1.800" fill="#fff" opacity=".55"/></g></svg>
<svg class="abs" style="left:1212px;top:144px" width="21" height="19" viewBox="0 0 21 19"><rect x="1.500" y="1" width="18" height="12.500" fill="#b4cee0" stroke="#3d4f60" stroke-width="1.300"/><path d="M10.500,13.500 v3.500" stroke="#3d4f60" stroke-width="2"/><path d="M6,17.500 h9" stroke="#2d3a48" stroke-width="2"/></svg>
<div class="dd" style="left:1052px;top:152px;border-top-color:#6d8ea8"></div>
<div class="dd" style="left:1092px;top:152px;border-top-color:#6d8ea8"></div>
<div class="dd" style="left:1132px;top:152px;border-top-color:#6d8ea8"></div>
<div class="dd" style="left:1198px;top:152px;border-top-color:#6d8ea8"></div>
<div class="dd" style="left:1238px;top:152px;border-top-color:#6d8ea8"></div>
<svg class="abs" style="left:1782px;top:146px" width="12" height="14" viewBox="0 0 12 14"><rect x=".5" y=".5" width="11" height="13" fill="none" stroke="#4d7b9d" stroke-width="1"/><rect x="0" y="0" width="12" height="2" fill="#4d7b9d"/><path d="M5,4 v7 l-3.800,-3.500z" fill="#4d7b9d"/></svg>
</div>

<div id="panel">
<div class="abs" style="left:0;top:4px;width:232px;height:1px;background:#5a6078"></div>
<div class="abs" style="left:0;top:19px;width:232px;height:1px;background:#5a6078"></div>
<div class="abs" style="left:0;top:24px;width:232px;height:1px;background:#7a7c80"></div>
<div class="abs" style="left:109px;top:9px;width:6px;height:6px;border-radius:50%;border:1px solid #9a9da2;background:#e6e8ec"></div>
<div class="abs" style="left:33px;top:25px;width:161px;height:25px;background:#aeb0b3;border-bottom:1px solid #85878b"></div>
<div class="abs" style="left:33px;top:25px;width:1px;height:25px;background:#85878b"></div>
<div class="abs" style="left:73px;top:25px;width:1px;height:25px;background:#85878b"></div>
<div class="abs" style="left:113px;top:25px;width:1px;height:25px;background:#85878b"></div>
<div class="abs" style="left:153px;top:25px;width:1px;height:25px;background:#85878b"></div>
<div class="abs" style="left:193px;top:25px;width:1px;height:25px;background:#85878b"></div>
<div class="abs" style="left:194px;top:25px;width:38px;height:7px;background:#aeb0b3"></div>
<div class="abs" style="left:205px;top:28px;width:6px;height:2px;background:#3f8fc2"></div>
<div class="abs" style="left:195px;top:31px;width:37px;height:19px;background:#fff"></div>
<div class="abs" style="left:196px;top:32px;width:17px;height:17px;background:#fcfcfc;border:1px solid #d4d6da"></div>
<div class="abs" style="left:211px;top:25px;width:21px;height:21px;background:#dcdfe4"></div>
<div class="abs" style="left:203px;top:36px;width:0;height:0;border:3.500px solid transparent;border-right:4px solid #111;border-left:0"></div>
<svg class="abs" style="left:217px;top:29px" width="10" height="14" viewBox="0 0 10 14"><path d="M2.500,2 L7.500,7 L2.500,12" fill="none" stroke="#222" stroke-width="1.600"/></svg>
<svg class="abs" style="left:4px;top:27px" width="20" height="20" viewBox="0 0 20 20"><path d="M2.4,13.5 L13.2,18.9 L13.2,14.4 L7.8,11.7 L7.8,6.4 L2.4,3.7Z" fill="#f7d648"/><path d="M8.6,0.6 L14.0,3.3 L7.8,6.4 L2.4,3.7Z" fill="#fbe68a"/><path d="M14.0,8.6 L19.4,11.3 L13.2,14.4 L7.8,11.7Z" fill="#fbe68a"/><path d="M14.0,3.3 L7.8,6.4 L7.8,11.7 L14.0,8.6Z" fill="#d9a91c"/><path d="M19.4,15.8 L13.2,18.9 L13.2,14.4 L19.4,11.3Z" fill="#d9a91c"/><path d="M8.6,0.6 L14.0,3.3 L14.0,8.6 L19.4,11.3 L19.4,15.8 L13.2,18.9 L2.4,13.5 L2.4,3.7Z" fill="none" stroke="#9a7408" stroke-width="1" stroke-linejoin="round"/><path d="M2.4,13.5 L13.2,18.9 L13.2,14.4 L7.8,11.7 L7.8,6.4 L2.4,3.7Z M14.0,3.3 L7.8,6.4 L7.8,11.7 L14.0,8.6Z M19.4,15.8 L13.2,18.9 L13.2,14.4 L19.4,11.3Z" fill="none" stroke="#a57d0c" stroke-width=".6" stroke-linejoin="round"/></svg>
<svg class="abs" style="left:45px;top:27px" width="18" height="20" viewBox="0 0 18 20"><rect x="1" y="2" width="16" height="16.500" rx="1" fill="#fff" stroke="#1f4f78" stroke-width="1.200"/><rect x="1" y="2" width="16" height="3" fill="#4f9fd0" stroke="#1f4f78" stroke-width=".8"/><g fill="#4f9fd0" stroke="#1f5f8c" stroke-width=".6"><rect x="3" y="7" width="3.500" height="2.200"/><rect x="3" y="11" width="3.500" height="2.200"/><rect x="3" y="15" width="3.500" height="2.200"/></g><path d="M8,8 h7 M8,12 h7 M8,16 h7" stroke="#333" stroke-width="1.100"/></svg>
<svg class="abs" style="left:86px;top:27px" width="16" height="20" viewBox="0 0 16 20"><path d="M2,1.500 V18.500 M2,2 H7 M2,6.500 H7 M2,15 H9" fill="none" stroke="#333" stroke-width="1.300"/><rect x="7" y="2.500" width="5" height="5" fill="#fff" stroke="#333" stroke-width="1"/><rect x="9.500" y="11.500" width="5" height="5.500" fill="#fff" stroke="#333" stroke-width="1"/><path d="M2,1.500 H7" stroke="#333" stroke-width="1.300"/></svg>
<svg class="abs" style="left:124px;top:27px" width="20" height="20" viewBox="0 0 20 20"><circle cx="10" cy="10" r="6" fill="none" stroke="#111" stroke-width="1.700"/><path d="M10,1 V19 M1,10 H19" stroke="#111" stroke-width="1.700"/></svg>
<svg class="abs" style="left:164px;top:27px" width="20" height="20" viewBox="0 0 20 20"><circle cx="10" cy="10" r="9" fill="#f0c020"/><path d="M10,10 L10,1 A9,9 0 0 0 1,10Z" fill="#2a6ad8"/><path d="M10,10 L1,10 A9,9 0 0 0 5,17.500Z" fill="#2aa838"/><path d="M10,10 L10,1 A9,9 0 0 1 19,10Z" fill="#e02020"/><path d="M10,10 L19,10 A9,9 0 0 1 5,17.500Z" fill="#f0c020"/><ellipse cx="13.500" cy="6" rx="2.600" ry="4.500" transform="rotate(-30 13.500 6)" fill="#111"/><ellipse cx="7" cy="5" rx="3" ry="1.800" fill="#fff" opacity=".5"/></svg>
<div class="abs" style="left:0;top:51px;width:229px;height:24px;background:#efefef;border:1px solid #d0d2d6;border-left:0"></div>
<svg class="abs" style="left:0px;top:54px" width="18" height="20" viewBox="0 0 18 20"><path d="M1.500,3 L7,10 V17 L10,18.500 V10 L15.500,3" fill="#fff" stroke="#333" stroke-width="1.100" stroke-linejoin="round"/><ellipse cx="8.500" cy="2.800" rx="7.500" ry="1.700" fill="#4f9fd0" stroke="#1f5f8c" stroke-width=".8"/></svg>
<svg class="abs" style="left:-5px;top:77px" width="20" height="20" viewBox="0 0 20 20"><path d="M2.4,13.5 L13.2,18.9 L13.2,14.4 L7.8,11.7 L7.8,6.4 L2.4,3.7Z" fill="#f7d648"/><path d="M8.6,0.6 L14.0,3.3 L7.8,6.4 L2.4,3.7Z" fill="#fbe68a"/><path d="M14.0,8.6 L19.4,11.3 L13.2,14.4 L7.8,11.7Z" fill="#fbe68a"/><path d="M14.0,3.3 L7.8,6.4 L7.8,11.7 L14.0,8.6Z" fill="#d9a91c"/><path d="M19.4,15.8 L13.2,18.9 L13.2,14.4 L19.4,11.3Z" fill="#d9a91c"/><path d="M8.6,0.6 L14.0,3.3 L14.0,8.6 L19.4,11.3 L19.4,15.8 L13.2,18.9 L2.4,13.5 L2.4,3.7Z" fill="none" stroke="#9a7408" stroke-width="1" stroke-linejoin="round"/><path d="M2.4,13.5 L13.2,18.9 L13.2,14.4 L7.8,11.7 L7.8,6.4 L2.4,3.7Z M14.0,3.3 L7.8,6.4 L7.8,11.7 L14.0,8.6Z M19.4,15.8 L13.2,18.9 L13.2,14.4 L19.4,11.3Z" fill="none" stroke="#a57d0c" stroke-width=".6" stroke-linejoin="round"/></svg>
<div class="ti" style="left:19.500px;top:76px;letter-spacing:-0.14px">Teil1 (01 "Standard")</div>
<div class="abs" style="left:0;top:97px;width:232px;height:3px;background:#e6a92e"></div>
<div class="ex" style="top:105px"></div>
<svg class="abs" style="left:18.5px;top:99px" width="20" height="20" viewBox="0 0 20 20"><path d="M1,3 Q1,1.500 2.500,1.500 H7 L8.500,3.500 H16.500 Q18,3.500 18,5 V16 Q18,17.500 16.500,17.500 H2.500 Q1,17.500 1,16Z" fill="#f6f6f6" stroke="#444" stroke-width="1.100"/><path d="M1,6 H18" stroke="#444" stroke-width=".6" opacity=".5"/><circle cx="11" cy="11" r="4" fill="#fff" stroke="#333" stroke-width="1"/><path d="M11,8.500 V11 L13,12" fill="none" stroke="#333" stroke-width=".9"/><path d="M3.500,11.500 l2.500,3 l2.500,-3z" fill="#2f7db3"/><path d="M6,12 Q6,15.500 10,15.800" fill="none" stroke="#2f7db3" stroke-width="1.300"/></svg>
<div class="ti" style="left:42.300px;top:98px;letter-spacing:0.00px">Historie</div>
<svg class="abs" style="left:18.5px;top:121px" width="20" height="20" viewBox="0 0 20 20"><path d="M1,3 Q1,1.500 2.500,1.500 H7 L8.500,3.500 H16.500 Q18,3.500 18,5 V16 Q18,17.500 16.500,17.500 H2.500 Q1,17.500 1,16Z" fill="#f6f6f6" stroke="#444" stroke-width="1.100"/><path d="M1,6 H18" stroke="#444" stroke-width=".6" opacity=".5"/><circle cx="10.500" cy="11" r="4.300" fill="#fff" stroke="#222" stroke-width="1.200"/><path d="M10.500,11 L13,8" stroke="#222" stroke-width="1"/><path d="M10.500,11 L13.500,13.500" stroke="#e03010" stroke-width="1.800"/></svg>
<div class="ti" style="left:42.300px;top:120px;letter-spacing:-0.52px">Sensoren</div>
<div class="ex" style="top:149px"></div>
<svg class="abs" style="left:18.5px;top:143px" width="20" height="20" viewBox="0 0 20 20"><path d="M1,3 Q1,1.500 2.500,1.500 H7 L8.500,3.500 H16.500 Q18,3.500 18,5 V16 Q18,17.500 16.500,17.500 H2.500 Q1,17.500 1,16Z" fill="#f6f6f6" stroke="#444" stroke-width="1.100"/><path d="M1,6 H18" stroke="#444" stroke-width=".6" opacity=".5"/><path d="M5.500,8 H10.500 L13,10.500 V15.500 H5.500Z" fill="#fff" stroke="#666" stroke-width=".9"/><path d="M10.500,8 V10.500 H13" fill="none" stroke="#666" stroke-width=".8"/></svg>
<div class="ti" style="left:42.300px;top:142px;letter-spacing:0.02px">Konstruktionsordner</div>
<div class="ex" style="top:171px"></div>
<svg class="abs" style="left:18.5px;top:165px" width="20" height="20" viewBox="0 0 20 20"><path d="M1,3 Q1,1.500 2.500,1.500 H7 L8.500,3.500 H16.500 Q18,3.500 18,5 V16 Q18,17.500 16.500,17.500 H2.500 Q1,17.500 1,16Z" fill="#f6f6f6" stroke="#444" stroke-width="1.100"/><path d="M1,6 H18" stroke="#444" stroke-width=".6" opacity=".5"/><text x="9.500" y="16" font-size="12.500" font-family="Liberation Serif,serif" font-weight="bold" fill="#2f78ad" text-anchor="middle">A</text></svg>
<div class="ti" style="left:42.300px;top:164px;letter-spacing:-0.06px">Beschriftungen</div>
<div class="ex" style="top:193px"></div>
<svg class="abs" style="left:18.5px;top:187px" width="20" height="20" viewBox="0 0 20 20"><rect x="1" y="1" width="12" height="10.500" fill="#fff" stroke="#444" stroke-width="1"/><rect x="1" y="1" width="12" height="2" fill="#1f5f8c"/><path d="M1,5.500 h12 M1,8.500 h12 M5,3 v8.500 M9,3 v8.500" stroke="#444" stroke-width=".8"/><g stroke="#2f86c0" stroke-width="1.500" fill="none"><path d="M10,10 l3,3 M13,10.500 v2.500 h-2.500"/><path d="M19,10 l-3,3 M16,10.500 v2.500 h2.500"/><path d="M10,19 l3,-3 M13,18.500 v-2.500 h-2.500"/><path d="M19,19 l-3,-3 M16,18.500 v-2.500 h2.500"/></g></svg>
<div class="ti" style="left:42.300px;top:186px;letter-spacing:-0.09px">Zuschnittsliste(1)</div>
<div class="ex" style="top:215px"></div>
<svg class="abs" style="left:18.5px;top:209px" width="20" height="20" viewBox="0 0 20 20"><path d="M1,3 Q1,1.500 2.500,1.500 H7 L8.500,3.500 H16.500 Q18,3.500 18,5 V16 Q18,17.500 16.500,17.500 H2.500 Q1,17.500 1,16Z" fill="#f6f6f6" stroke="#444" stroke-width="1.100"/><path d="M1,6 H18" stroke="#444" stroke-width=".6" opacity=".5"/><text x="9.500" y="16" font-size="12.500" font-family="Liberation Serif,serif" fill="#111" text-anchor="middle">Σ</text></svg>
<div class="ti" style="left:42.300px;top:208px;letter-spacing:-0.12px">Gleichungen</div>
<svg class="abs" style="left:18.5px;top:231px" width="20" height="20" viewBox="0 0 20 20"><circle cx="2.500" cy="3" r="1.600" fill="#fff" stroke="#555" stroke-width=".8"/><circle cx="2.500" cy="9.500" r="1.600" fill="#4f9fd0" stroke="#1f5f8c" stroke-width=".7"/><circle cx="2.500" cy="16" r="1.600" fill="#f2c832" stroke="#9a7408" stroke-width=".7"/><path d="M6,3 H18 M6,9.500 H18 M6,16 H10" stroke="#222" stroke-width="1.600"/><circle cx="14.500" cy="16" r="3.200" fill="#222"/><circle cx="14.500" cy="16" r="4" fill="none" stroke="#222" stroke-width="1.600" stroke-dasharray="1.400 1.100"/><circle cx="14.500" cy="16" r="1.200" fill="#dcdfe4"/></svg>
<div class="ti" style="left:42.300px;top:230px;letter-spacing:0.08px">Material &lt;nicht festgelegt&gt;</div>
<svg class="abs" style="left:18.5px;top:253px" width="20" height="20" viewBox="0 0 20 20"><path d="M3.500,4.500 L16,1.500 V16 L3.500,19Z" fill="#4f9fd0" stroke="#1f5f8c" stroke-width="1"/><path d="M9.500,0.500 V20" stroke="#111" stroke-width="1" stroke-dasharray="3 1.300"/></svg>
<div class="ti" style="left:42.300px;top:252px;letter-spacing:-0.15px">Vorderansicht-XY</div>
<svg class="abs" style="left:18.5px;top:275px" width="20" height="20" viewBox="0 0 20 20"><path d="M3.500,4.500 L16,1.500 V16 L3.500,19Z" fill="#4f9fd0" stroke="#1f5f8c" stroke-width="1"/><path d="M9.500,0.500 V20" stroke="#111" stroke-width="1" stroke-dasharray="3 1.300"/></svg>
<div class="ti" style="left:42.300px;top:274px;letter-spacing:-0.09px">Draufsicht-ZX</div>
<svg class="abs" style="left:18.5px;top:297px" width="20" height="20" viewBox="0 0 20 20"><path d="M3.500,4.500 L16,1.500 V16 L3.500,19Z" fill="#4f9fd0" stroke="#1f5f8c" stroke-width="1"/><path d="M9.500,0.500 V20" stroke="#111" stroke-width="1" stroke-dasharray="3 1.300"/></svg>
<div class="ti" style="left:42.300px;top:296px;letter-spacing:-0.17px">Seitenansicht-YZ</div>
<svg class="abs" style="left:18.5px;top:319px" width="20" height="20" viewBox="0 0 20 20"><path d="M4.500,3 V16.500 H16" fill="none" stroke="#222" stroke-width="1.600"/><path d="M4.500,0.500 l2.300,4 h-4.600z M19,16.500 l-4,2.300 v-4.600z" fill="#222"/></svg>
<div class="ti" style="left:42.300px;top:318px;letter-spacing:-0.13px">Ursprung</div>
<div class="ex" style="top:347px"></div>
<svg class="abs" style="left:18.5px;top:341px" width="20" height="20" viewBox="0 0 20 20"><path d="M1,3 Q1,1.500 2.500,1.500 H7 L8.500,3.500 H16.500 Q18,3.500 18,5 V16 Q18,17.500 16.500,17.500 H2.500 Q1,17.500 1,16Z" fill="#f6f6f6" stroke="#444" stroke-width="1.100"/><path d="M1,6 H18" stroke="#444" stroke-width=".6" opacity=".5"/><rect x="6" y="7.500" width="7" height="8" fill="#fff" stroke="#2f78ad" stroke-width="1.300" stroke-dasharray="2 1"/><circle cx="9.500" cy="11.500" r="1.500" fill="none" stroke="#444" stroke-width=".9"/></svg>
<div class="ti" style="left:42.300px;top:340px;letter-spacing:-0.31px">Blech</div>
<div class="ex" style="top:369px"></div>
<svg class="abs" style="left:18.5px;top:363px" width="20" height="20" viewBox="0 0 20 20"><g transform="translate(-.7,0)"><path d="M1.200,2.200 L3.600,2.200 L6.700,5.500 L6.700,11.400 L10.300,11.400 L14.100,7.300 L14.100,1.100 L17.700,1.100 L19.900,3.500 L19.900,11.400 L13.800,17.600 L8.200,17.600 L1.200,10.400Z" fill="#f8f8f8" stroke="#222" stroke-width="1.100" stroke-linejoin="round"/><path d="M1.200,2.200 L4.600,5.800 V11.900 M4.600,5.800 L6.700,5.500 M17.600,3.500 V9.400 M14.100,1.100 Q15,3 17.600,3.500 L19.900,3.500" fill="none" stroke="#777" stroke-width=".8"/><path d="M14.400,7.300 L17.700,10.400 L13.500,14.600 L10.300,11.400Z" fill="#5fa4cc" stroke="#0d3f63" stroke-width="1.100" stroke-linejoin="round"/><path d="M6.400,12.200 L9.800,15.300" stroke="#0d4f7a" stroke-width="1.500"/><path d="M10.300,15.300 L13.100,15.500" stroke="#999" stroke-width=".8"/></g></svg>
<div class="ti" style="left:42.300px;top:362px;letter-spacing:-0.44px">Basis-Blech1</div>
<div class="ex" style="top:391px"></div>
<svg class="abs" style="left:18.5px;top:385px" width="20" height="20" viewBox="0 0 20 20"><path d="M9.900,9.600 L12,8 L18.600,13.300 V15.700 L12.200,17.300 L9.900,15.300Z" fill="#fafafa" stroke="#333" stroke-width="1" stroke-linejoin="round"/><path d="M12.200,15.600 L18.600,13.300" stroke="#333" stroke-width=".8"/><path d="M1.300,1.400 L5.400,1 L9.900,5.100 V15.300 L12.200,15.700 V17.200 L9.900,18.300 L7.300,17.900 L1.300,11.500Z" fill="#86c4e6" stroke="#0d4f7a" stroke-width="1.100" stroke-linejoin="round"/><path d="M1.300,1.400 L7.650,6.200 V17.500 M7.650,6.200 L9.900,5.100 M1.300,8.600 L7.650,13.600 M7.650,15.500 L9.900,15.300" fill="none" stroke="#0d4f7a" stroke-width=".9"/><path d="M8.700,6.500 V15" stroke="#c8e8f8" stroke-width=".9"/></svg>
<div class="ti" style="left:42.300px;top:384px;letter-spacing:-0.39px">Kante-Lasche1</div>
<svg class="abs" style="left:18.5px;top:407px" width="20" height="20" viewBox="0 0 20 20"><path d="M1.500,6 Q2,1.500 9,1 L17,3.500 V13 L9.500,18.500 L1.500,14.500Z" fill="#f4f5f7" stroke="#333" stroke-width="1.100" stroke-linejoin="round"/><path d="M9,1 L17,3.500 V8 L9.500,10.500 Q9.500,5 3.500,3 Q5.500,1.300 9,1Z" fill="#4f9fd0" stroke="#1f5f8c" stroke-width=".8"/><path d="M9.500,10.500 V18.500 M1.500,6 Q2.500,3.500 3.500,3" fill="none" stroke="#333" stroke-width=".8"/></svg>
<div class="ti" style="left:42.300px;top:406px;letter-spacing:-0.08px">Verrundung1</div>
<svg class="abs" style="left:18.5px;top:429px" width="20" height="20" viewBox="0 0 20 20"><path d="M1.500,6 Q2,1.500 9,1 L17,3.500 V13 L9.500,18.500 L1.500,14.500Z" fill="#f4f5f7" stroke="#333" stroke-width="1.100" stroke-linejoin="round"/><path d="M9,1 L17,3.500 V8 L9.500,10.500 Q9.500,5 3.500,3 Q5.500,1.300 9,1Z" fill="#4f9fd0" stroke="#1f5f8c" stroke-width=".8"/><path d="M9.500,10.500 V18.500 M1.500,6 Q2.500,3.500 3.500,3" fill="none" stroke="#333" stroke-width=".8"/></svg>
<div class="ti" style="left:42.300px;top:428px;letter-spacing:0.01px">Verrundung2</div>
<svg class="abs" style="left:18.5px;top:451px" width="20" height="20" viewBox="0 0 20 20"><path d="M10,4 L15,1 L20,2.500 V11 L15,14 L10,12.500Z" fill="#eceef1" stroke="#777" stroke-width=".9"/><path d="M15,1 V10 L10,12.500 M15,10 L20,11" fill="none" stroke="#999" stroke-width=".7"/><path d="M3,13.500 L12,11.500 L20,13 L11,19.500 L3,16Z" fill="#4f9fd0" stroke="#1f5f8c" stroke-width=".9"/><path d="M8,2.500 Q2,5 4,11.500" fill="none" stroke="#111" stroke-width="2.200"/><path d="M1,9.500 L8,9 L5.500,15Z" fill="#111"/></svg>
<div class="ti" style="left:42.300px;top:450px;letter-spacing:-0.24px">Entfalten1</div>
<div class="ex" style="top:479px"></div>
<svg class="abs" style="left:18.5px;top:473px" width="20" height="20" viewBox="0 0 20 20"><path d="M1,3 Q1,1.500 2.500,1.500 H7 L8.500,3.500 H16.500 Q18,3.500 18,5 V16 Q18,17.500 16.500,17.500 H2.500 Q1,17.500 1,16Z" fill="#e6e8eb" stroke="#b4b7bc" stroke-width="1.100"/><path d="M1,6 H18" stroke="#b4b7bc" stroke-width=".6" opacity=".5"/><path d="M4,10.500 L9,8 L16,11.500 V13.500 L11,16 L4,12.500Z" fill="#e6e8eb" stroke="#b4b7bc" stroke-width=".9"/><path d="M4,10.500 L11,14 L16,11.500" fill="none" stroke="#b4b7bc" stroke-width=".8"/></svg>
<div class="ti g" style="left:42.300px;top:472px;letter-spacing:0.15px">Abwicklung</div>
<div class="abs" style="left:0;top:494px;width:232px;height:3px;background:#2e8bcb"></div>
</div>
<div id="pborder"></div>
<div class="abs" style="left:234px;top:602px;width:9.500px;height:39px;background:#dcdfe4;border:1px solid #7f8185;border-left:0"></div>
<div class="abs" style="left:235px;top:618px;width:6px;height:6px;border-radius:50%;border:1px solid #7a7c80;background:#c9cbcf;box-shadow:0 0 0 1px #e8eaed"></div>

</body></html>
